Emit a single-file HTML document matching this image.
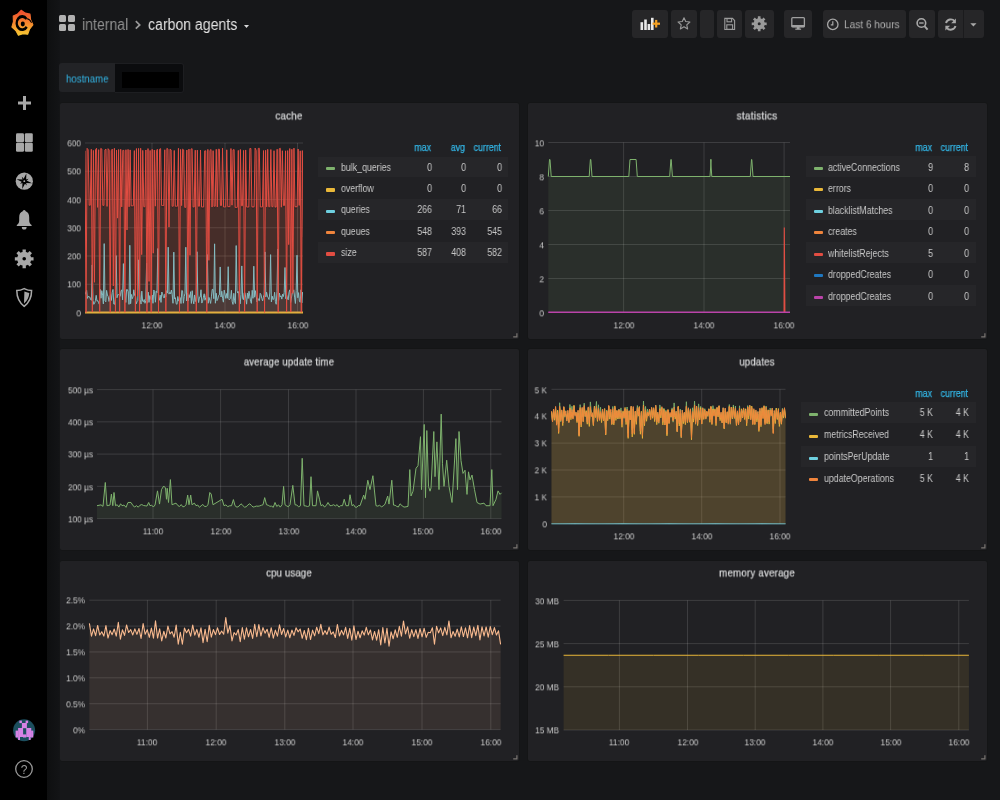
<!DOCTYPE html><html><head><meta charset="utf-8"><style>
html,body{margin:0;padding:0;}
body{width:1000px;height:800px;overflow:hidden;position:relative;background:#161719;font-family:"Liberation Sans",sans-serif;}
.t{position:absolute;white-space:nowrap;line-height:1;will-change:transform;}
.panel{position:absolute;background:#212124;border:1px solid #141516;border-radius:3px;box-sizing:border-box;}
.btn{position:absolute;top:10px;height:28px;background:#262628;border-radius:3px;}
.lrow{position:absolute;background:#262629;}
.sw{position:absolute;width:9.4px;height:3.2px;border-radius:1px;}
svg{position:absolute;left:0;top:0;overflow:visible;}
</style></head><body>
<div style="position:absolute;left:0;top:0;width:47px;height:800px;background:#000"></div>
<div style="position:absolute;left:47px;top:0;width:13px;height:800px;background:linear-gradient(90deg,#0e0f10,#131416)"></div>
<div class="panel" style="left:59px;top:102px;width:461px;height:238px"></div>
<svg width="1000" height="800"><path d="M513.2,336.9 L516.9,336.9 L516.9,333.3" fill="none" stroke="#7a7672" stroke-width="1.2"/></svg>
<div class="panel" style="left:527px;top:102px;width:461px;height:238px"></div>
<svg width="1000" height="800"><path d="M981.2,336.9 L984.9,336.9 L984.9,333.3" fill="none" stroke="#7a7672" stroke-width="1.2"/></svg>
<div class="panel" style="left:59px;top:348px;width:461px;height:203px"></div>
<svg width="1000" height="800"><path d="M513.2,547.9 L516.9,547.9 L516.9,544.3" fill="none" stroke="#7a7672" stroke-width="1.2"/></svg>
<div class="panel" style="left:527px;top:348px;width:461px;height:203px"></div>
<svg width="1000" height="800"><path d="M981.2,547.9 L984.9,547.9 L984.9,544.3" fill="none" stroke="#7a7672" stroke-width="1.2"/></svg>
<div class="panel" style="left:59px;top:560px;width:461px;height:202px"></div>
<svg width="1000" height="800"><path d="M513.2,758.9 L516.9,758.9 L516.9,755.3" fill="none" stroke="#7a7672" stroke-width="1.2"/></svg>
<div class="panel" style="left:527px;top:560px;width:461px;height:202px"></div>
<svg width="1000" height="800"><path d="M981.2,758.9 L984.9,758.9 L984.9,755.3" fill="none" stroke="#7a7672" stroke-width="1.2"/></svg>
<div style="position:absolute;left:59px;top:15px;width:16px;height:16px"><div style="position:absolute;left:0;top:0;width:7px;height:7px;background:#b1b1b1;border-radius:1.5px"></div><div style="position:absolute;left:9px;top:0;width:7px;height:7px;background:#b1b1b1;border-radius:1.5px"></div><div style="position:absolute;left:0;top:9px;width:7px;height:7px;background:#b1b1b1;border-radius:1.5px"></div><div style="position:absolute;left:9px;top:9px;width:7px;height:7px;background:#b1b1b1;border-radius:1.5px"></div></div>
<div class="t" style="left:82px;top:25px;font-size:16px;color:#8e8e8e;font-weight:normal;transform:translateY(-50%) scaleX(0.88);transform-origin:left center;">internal</div>
<svg width="1000" height="800" style="pointer-events:none"><path d="M135.8,21.2 L139.7,24.9 L135.8,28.6" stroke="#9a9a9a" stroke-width="1.7" fill="none"/></svg>
<div class="t" style="left:148px;top:25px;font-size:16px;color:#e3e3e3;font-weight:normal;transform:translateY(-50%) scaleX(0.88);transform-origin:left center;">carbon agents</div>
<svg width="1000" height="800"><path d="M244,25 L249,25 L246.5,28 Z" fill="#d8d9da"/></svg>
<div class="btn" style="left:632px;width:36px"></div>
<div class="btn" style="left:671px;width:26px"></div>
<div class="btn" style="left:700px;width:14px"></div>
<div class="btn" style="left:717px;width:25px"></div>
<div class="btn" style="left:745px;width:29px"></div>
<div class="btn" style="left:784px;width:28px"></div>
<div class="btn" style="left:823px;width:83px"></div>
<div class="btn" style="left:909px;width:26px"></div>
<div class="btn" style="left:938px;width:46px"></div>
<div style="position:absolute;left:963px;top:10px;width:1px;height:28px;background:#1b1b1d"></div>
<div class="t" style="left:843.8px;top:24.4px;font-size:11.6px;color:#b4b4b4;font-weight:normal;transform:translateY(-50%) scaleX(0.87);transform-origin:left center;">Last 6 hours</div>
<div style="position:absolute;left:59px;top:63px;width:56px;height:29px;background:#222326;border-radius:3px 0 0 3px"></div>
<div style="position:absolute;left:115px;top:62.5px;width:69px;height:30.5px;box-sizing:border-box;background:#0b0c0e;border:1px solid #1d1e21;border-left:none;border-radius:0 3px 3px 0"></div>
<div style="position:absolute;left:122px;top:72px;width:57px;height:16px;background:#000"></div>
<div class="t" style="left:66px;top:78.5px;font-size:11px;color:#33b5e5;font-weight:normal;transform:translateY(-50%) scaleX(0.88);transform-origin:left center;">hostname</div>
<div class="t" style="left:289.2px;top:116px;font-size:11px;color:#d8d9da;font-weight:normal;transform:translate(-50%,-50%) scaleX(0.89);transform-origin:center center;-webkit-text-stroke:0.25px #d8d9da;letter-spacing:0.25px;">cache</div>
<div class="t" style="left:81px;top:313.7px;font-size:9.3px;color:#c8c8c8;font-weight:normal;transform:translate(-100%,-50%) scaleX(0.89);transform-origin:right center;">0</div>
<div class="t" style="left:81px;top:285.45px;font-size:9.3px;color:#c8c8c8;font-weight:normal;transform:translate(-100%,-50%) scaleX(0.89);transform-origin:right center;">100</div>
<div class="t" style="left:81px;top:257.2px;font-size:9.3px;color:#c8c8c8;font-weight:normal;transform:translate(-100%,-50%) scaleX(0.89);transform-origin:right center;">200</div>
<div class="t" style="left:81px;top:228.95px;font-size:9.3px;color:#c8c8c8;font-weight:normal;transform:translate(-100%,-50%) scaleX(0.89);transform-origin:right center;">300</div>
<div class="t" style="left:81px;top:200.7px;font-size:9.3px;color:#c8c8c8;font-weight:normal;transform:translate(-100%,-50%) scaleX(0.89);transform-origin:right center;">400</div>
<div class="t" style="left:81px;top:172.45px;font-size:9.3px;color:#c8c8c8;font-weight:normal;transform:translate(-100%,-50%) scaleX(0.89);transform-origin:right center;">500</div>
<div class="t" style="left:81px;top:144.2px;font-size:9.3px;color:#c8c8c8;font-weight:normal;transform:translate(-100%,-50%) scaleX(0.89);transform-origin:right center;">600</div>
<div class="t" style="left:152px;top:326.4px;font-size:9.3px;color:#c8c8c8;font-weight:normal;transform:translate(-50%,-50%) scaleX(0.9);transform-origin:center center;">12:00</div>
<div class="t" style="left:225px;top:326.4px;font-size:9.3px;color:#c8c8c8;font-weight:normal;transform:translate(-50%,-50%) scaleX(0.9);transform-origin:center center;">14:00</div>
<div class="t" style="left:297.5px;top:326.4px;font-size:9.3px;color:#c8c8c8;font-weight:normal;transform:translate(-50%,-50%) scaleX(0.9);transform-origin:center center;">16:00</div>
<div class="t" style="left:431px;top:147.7px;font-size:10px;color:#33b5e5;font-weight:normal;transform:translate(-100%,-50%) scaleX(0.88);transform-origin:right center;-webkit-text-stroke:0.25px #33b5e5;">max</div>
<div class="t" style="left:465px;top:147.7px;font-size:10px;color:#33b5e5;font-weight:normal;transform:translate(-100%,-50%) scaleX(0.88);transform-origin:right center;-webkit-text-stroke:0.25px #33b5e5;">avg</div>
<div class="t" style="left:501px;top:147.7px;font-size:10px;color:#33b5e5;font-weight:normal;transform:translate(-100%,-50%) scaleX(0.88);transform-origin:right center;-webkit-text-stroke:0.25px #33b5e5;">current</div>
<div class="lrow" style="left:318px;top:156.6px;width:190px;height:20.6px"></div>
<div class="sw" style="left:326px;top:167.0px;background:#7EB26D"></div>
<div class="t" style="left:340.5px;top:167.7px;font-size:10px;color:#c8c8c8;font-weight:normal;transform:translateY(-50%) scaleX(0.88);transform-origin:left center;">bulk_queries</div>
<div class="t" style="left:432px;top:167.7px;font-size:10px;color:#c8c8c8;font-weight:normal;transform:translate(-100%,-50%) scaleX(0.88);transform-origin:right center;">0</div>
<div class="t" style="left:466px;top:167.7px;font-size:10px;color:#c8c8c8;font-weight:normal;transform:translate(-100%,-50%) scaleX(0.88);transform-origin:right center;">0</div>
<div class="t" style="left:502px;top:167.7px;font-size:10px;color:#c8c8c8;font-weight:normal;transform:translate(-100%,-50%) scaleX(0.88);transform-origin:right center;">0</div>
<div class="sw" style="left:326px;top:188.35px;background:#EAB839"></div>
<div class="t" style="left:340.5px;top:189.04999999999998px;font-size:10px;color:#c8c8c8;font-weight:normal;transform:translateY(-50%) scaleX(0.88);transform-origin:left center;">overflow</div>
<div class="t" style="left:432px;top:189.04999999999998px;font-size:10px;color:#c8c8c8;font-weight:normal;transform:translate(-100%,-50%) scaleX(0.88);transform-origin:right center;">0</div>
<div class="t" style="left:466px;top:189.04999999999998px;font-size:10px;color:#c8c8c8;font-weight:normal;transform:translate(-100%,-50%) scaleX(0.88);transform-origin:right center;">0</div>
<div class="t" style="left:502px;top:189.04999999999998px;font-size:10px;color:#c8c8c8;font-weight:normal;transform:translate(-100%,-50%) scaleX(0.88);transform-origin:right center;">0</div>
<div class="lrow" style="left:318px;top:199.3px;width:190px;height:20.6px"></div>
<div class="sw" style="left:326px;top:209.70000000000002px;background:#6ED0E0"></div>
<div class="t" style="left:340.5px;top:210.4px;font-size:10px;color:#c8c8c8;font-weight:normal;transform:translateY(-50%) scaleX(0.88);transform-origin:left center;">queries</div>
<div class="t" style="left:432px;top:210.4px;font-size:10px;color:#c8c8c8;font-weight:normal;transform:translate(-100%,-50%) scaleX(0.88);transform-origin:right center;">266</div>
<div class="t" style="left:466px;top:210.4px;font-size:10px;color:#c8c8c8;font-weight:normal;transform:translate(-100%,-50%) scaleX(0.88);transform-origin:right center;">71</div>
<div class="t" style="left:502px;top:210.4px;font-size:10px;color:#c8c8c8;font-weight:normal;transform:translate(-100%,-50%) scaleX(0.88);transform-origin:right center;">66</div>
<div class="sw" style="left:326px;top:231.05px;background:#EF843C"></div>
<div class="t" style="left:340.5px;top:231.75px;font-size:10px;color:#c8c8c8;font-weight:normal;transform:translateY(-50%) scaleX(0.88);transform-origin:left center;">queues</div>
<div class="t" style="left:432px;top:231.75px;font-size:10px;color:#c8c8c8;font-weight:normal;transform:translate(-100%,-50%) scaleX(0.88);transform-origin:right center;">548</div>
<div class="t" style="left:466px;top:231.75px;font-size:10px;color:#c8c8c8;font-weight:normal;transform:translate(-100%,-50%) scaleX(0.88);transform-origin:right center;">393</div>
<div class="t" style="left:502px;top:231.75px;font-size:10px;color:#c8c8c8;font-weight:normal;transform:translate(-100%,-50%) scaleX(0.88);transform-origin:right center;">545</div>
<div class="lrow" style="left:318px;top:242.0px;width:190px;height:20.6px"></div>
<div class="sw" style="left:326px;top:252.4px;background:#E24D42"></div>
<div class="t" style="left:340.5px;top:253.1px;font-size:10px;color:#c8c8c8;font-weight:normal;transform:translateY(-50%) scaleX(0.88);transform-origin:left center;">size</div>
<div class="t" style="left:432px;top:253.1px;font-size:10px;color:#c8c8c8;font-weight:normal;transform:translate(-100%,-50%) scaleX(0.88);transform-origin:right center;">587</div>
<div class="t" style="left:466px;top:253.1px;font-size:10px;color:#c8c8c8;font-weight:normal;transform:translate(-100%,-50%) scaleX(0.88);transform-origin:right center;">408</div>
<div class="t" style="left:502px;top:253.1px;font-size:10px;color:#c8c8c8;font-weight:normal;transform:translate(-100%,-50%) scaleX(0.88);transform-origin:right center;">582</div>
<div class="t" style="left:757px;top:116px;font-size:11px;color:#d8d9da;font-weight:normal;transform:translate(-50%,-50%) scaleX(0.91);transform-origin:center center;-webkit-text-stroke:0.25px #d8d9da;letter-spacing:0.25px;">statistics</div>
<div class="t" style="left:544px;top:313.7px;font-size:9.3px;color:#c8c8c8;font-weight:normal;transform:translate(-100%,-50%) scaleX(0.89);transform-origin:right center;">0</div>
<div class="t" style="left:544px;top:279.7px;font-size:9.3px;color:#c8c8c8;font-weight:normal;transform:translate(-100%,-50%) scaleX(0.89);transform-origin:right center;">2</div>
<div class="t" style="left:544px;top:245.7px;font-size:9.3px;color:#c8c8c8;font-weight:normal;transform:translate(-100%,-50%) scaleX(0.89);transform-origin:right center;">4</div>
<div class="t" style="left:544px;top:211.7px;font-size:9.3px;color:#c8c8c8;font-weight:normal;transform:translate(-100%,-50%) scaleX(0.89);transform-origin:right center;">6</div>
<div class="t" style="left:544px;top:177.7px;font-size:9.3px;color:#c8c8c8;font-weight:normal;transform:translate(-100%,-50%) scaleX(0.89);transform-origin:right center;">8</div>
<div class="t" style="left:544px;top:143.7px;font-size:9.3px;color:#c8c8c8;font-weight:normal;transform:translate(-100%,-50%) scaleX(0.89);transform-origin:right center;">10</div>
<div class="t" style="left:623.6px;top:326.4px;font-size:9.3px;color:#c8c8c8;font-weight:normal;transform:translate(-50%,-50%) scaleX(0.9);transform-origin:center center;">12:00</div>
<div class="t" style="left:704px;top:326.4px;font-size:9.3px;color:#c8c8c8;font-weight:normal;transform:translate(-50%,-50%) scaleX(0.9);transform-origin:center center;">14:00</div>
<div class="t" style="left:784.1px;top:326.4px;font-size:9.3px;color:#c8c8c8;font-weight:normal;transform:translate(-50%,-50%) scaleX(0.9);transform-origin:center center;">16:00</div>
<div class="t" style="left:932px;top:147.7px;font-size:10px;color:#33b5e5;font-weight:normal;transform:translate(-100%,-50%) scaleX(0.88);transform-origin:right center;-webkit-text-stroke:0.25px #33b5e5;">max</div>
<div class="t" style="left:968px;top:147.7px;font-size:10px;color:#33b5e5;font-weight:normal;transform:translate(-100%,-50%) scaleX(0.88);transform-origin:right center;-webkit-text-stroke:0.25px #33b5e5;">current</div>
<div class="lrow" style="left:805.5px;top:156.4px;width:170.8px;height:20.6px"></div>
<div class="sw" style="left:813.5px;top:166.8px;background:#7EB26D"></div>
<div class="t" style="left:828px;top:167.5px;font-size:10px;color:#c8c8c8;font-weight:normal;transform:translateY(-50%) scaleX(0.88);transform-origin:left center;">activeConnections</div>
<div class="t" style="left:933px;top:167.5px;font-size:10px;color:#c8c8c8;font-weight:normal;transform:translate(-100%,-50%) scaleX(0.88);transform-origin:right center;">9</div>
<div class="t" style="left:969px;top:167.5px;font-size:10px;color:#c8c8c8;font-weight:normal;transform:translate(-100%,-50%) scaleX(0.88);transform-origin:right center;">8</div>
<div class="sw" style="left:813.5px;top:188.3px;background:#EAB839"></div>
<div class="t" style="left:828px;top:189.0px;font-size:10px;color:#c8c8c8;font-weight:normal;transform:translateY(-50%) scaleX(0.88);transform-origin:left center;">errors</div>
<div class="t" style="left:933px;top:189.0px;font-size:10px;color:#c8c8c8;font-weight:normal;transform:translate(-100%,-50%) scaleX(0.88);transform-origin:right center;">0</div>
<div class="t" style="left:969px;top:189.0px;font-size:10px;color:#c8c8c8;font-weight:normal;transform:translate(-100%,-50%) scaleX(0.88);transform-origin:right center;">0</div>
<div class="lrow" style="left:805.5px;top:199.4px;width:170.8px;height:20.6px"></div>
<div class="sw" style="left:813.5px;top:209.8px;background:#6ED0E0"></div>
<div class="t" style="left:828px;top:210.5px;font-size:10px;color:#c8c8c8;font-weight:normal;transform:translateY(-50%) scaleX(0.88);transform-origin:left center;">blacklistMatches</div>
<div class="t" style="left:933px;top:210.5px;font-size:10px;color:#c8c8c8;font-weight:normal;transform:translate(-100%,-50%) scaleX(0.88);transform-origin:right center;">0</div>
<div class="t" style="left:969px;top:210.5px;font-size:10px;color:#c8c8c8;font-weight:normal;transform:translate(-100%,-50%) scaleX(0.88);transform-origin:right center;">0</div>
<div class="sw" style="left:813.5px;top:231.3px;background:#EF843C"></div>
<div class="t" style="left:828px;top:232.0px;font-size:10px;color:#c8c8c8;font-weight:normal;transform:translateY(-50%) scaleX(0.88);transform-origin:left center;">creates</div>
<div class="t" style="left:933px;top:232.0px;font-size:10px;color:#c8c8c8;font-weight:normal;transform:translate(-100%,-50%) scaleX(0.88);transform-origin:right center;">0</div>
<div class="t" style="left:969px;top:232.0px;font-size:10px;color:#c8c8c8;font-weight:normal;transform:translate(-100%,-50%) scaleX(0.88);transform-origin:right center;">0</div>
<div class="lrow" style="left:805.5px;top:242.4px;width:170.8px;height:20.6px"></div>
<div class="sw" style="left:813.5px;top:252.8px;background:#E24D42"></div>
<div class="t" style="left:828px;top:253.5px;font-size:10px;color:#c8c8c8;font-weight:normal;transform:translateY(-50%) scaleX(0.88);transform-origin:left center;">whitelistRejects</div>
<div class="t" style="left:933px;top:253.5px;font-size:10px;color:#c8c8c8;font-weight:normal;transform:translate(-100%,-50%) scaleX(0.88);transform-origin:right center;">5</div>
<div class="t" style="left:969px;top:253.5px;font-size:10px;color:#c8c8c8;font-weight:normal;transform:translate(-100%,-50%) scaleX(0.88);transform-origin:right center;">0</div>
<div class="sw" style="left:813.5px;top:274.29999999999995px;background:#1F78C1"></div>
<div class="t" style="left:828px;top:275.0px;font-size:10px;color:#c8c8c8;font-weight:normal;transform:translateY(-50%) scaleX(0.88);transform-origin:left center;">droppedCreates</div>
<div class="t" style="left:933px;top:275.0px;font-size:10px;color:#c8c8c8;font-weight:normal;transform:translate(-100%,-50%) scaleX(0.88);transform-origin:right center;">0</div>
<div class="t" style="left:969px;top:275.0px;font-size:10px;color:#c8c8c8;font-weight:normal;transform:translate(-100%,-50%) scaleX(0.88);transform-origin:right center;">0</div>
<div class="lrow" style="left:805.5px;top:285.4px;width:170.8px;height:20.6px"></div>
<div class="sw" style="left:813.5px;top:295.79999999999995px;background:#BA43A9"></div>
<div class="t" style="left:828px;top:296.5px;font-size:10px;color:#c8c8c8;font-weight:normal;transform:translateY(-50%) scaleX(0.88);transform-origin:left center;">droppedCreates</div>
<div class="t" style="left:933px;top:296.5px;font-size:10px;color:#c8c8c8;font-weight:normal;transform:translate(-100%,-50%) scaleX(0.88);transform-origin:right center;">0</div>
<div class="t" style="left:969px;top:296.5px;font-size:10px;color:#c8c8c8;font-weight:normal;transform:translate(-100%,-50%) scaleX(0.88);transform-origin:right center;">0</div>
<div class="t" style="left:289px;top:362px;font-size:11px;color:#d8d9da;font-weight:normal;transform:translate(-50%,-50%) scaleX(0.86);transform-origin:center center;-webkit-text-stroke:0.25px #d8d9da;letter-spacing:0.25px;">average update time</div>
<div class="t" style="left:92.5px;top:519.8000000000001px;font-size:9.3px;color:#c8c8c8;font-weight:normal;transform:translate(-100%,-50%) scaleX(0.89);transform-origin:right center;">100 µs</div>
<div class="t" style="left:92.5px;top:487.55px;font-size:9.3px;color:#c8c8c8;font-weight:normal;transform:translate(-100%,-50%) scaleX(0.89);transform-origin:right center;">200 µs</div>
<div class="t" style="left:92.5px;top:455.3px;font-size:9.3px;color:#c8c8c8;font-weight:normal;transform:translate(-100%,-50%) scaleX(0.89);transform-origin:right center;">300 µs</div>
<div class="t" style="left:92.5px;top:423.05px;font-size:9.3px;color:#c8c8c8;font-weight:normal;transform:translate(-100%,-50%) scaleX(0.89);transform-origin:right center;">400 µs</div>
<div class="t" style="left:92.5px;top:390.8px;font-size:9.3px;color:#c8c8c8;font-weight:normal;transform:translate(-100%,-50%) scaleX(0.89);transform-origin:right center;">500 µs</div>
<div class="t" style="left:153px;top:532.4px;font-size:9.3px;color:#c8c8c8;font-weight:normal;transform:translate(-50%,-50%) scaleX(0.9);transform-origin:center center;">11:00</div>
<div class="t" style="left:220.6px;top:532.4px;font-size:9.3px;color:#c8c8c8;font-weight:normal;transform:translate(-50%,-50%) scaleX(0.9);transform-origin:center center;">12:00</div>
<div class="t" style="left:288.5px;top:532.4px;font-size:9.3px;color:#c8c8c8;font-weight:normal;transform:translate(-50%,-50%) scaleX(0.9);transform-origin:center center;">13:00</div>
<div class="t" style="left:356px;top:532.4px;font-size:9.3px;color:#c8c8c8;font-weight:normal;transform:translate(-50%,-50%) scaleX(0.9);transform-origin:center center;">14:00</div>
<div class="t" style="left:423.4px;top:532.4px;font-size:9.3px;color:#c8c8c8;font-weight:normal;transform:translate(-50%,-50%) scaleX(0.9);transform-origin:center center;">15:00</div>
<div class="t" style="left:490.8px;top:532.4px;font-size:9.3px;color:#c8c8c8;font-weight:normal;transform:translate(-50%,-50%) scaleX(0.9);transform-origin:center center;">16:00</div>
<div class="t" style="left:756.8px;top:362px;font-size:11px;color:#d8d9da;font-weight:normal;transform:translate(-50%,-50%) scaleX(0.86);transform-origin:center center;-webkit-text-stroke:0.25px #d8d9da;letter-spacing:0.25px;">updates</div>
<div class="t" style="left:547px;top:525.0px;font-size:9.3px;color:#c8c8c8;font-weight:normal;transform:translate(-100%,-50%) scaleX(0.89);transform-origin:right center;">0</div>
<div class="t" style="left:547px;top:498.09999999999997px;font-size:9.3px;color:#c8c8c8;font-weight:normal;transform:translate(-100%,-50%) scaleX(0.89);transform-origin:right center;">1 K</div>
<div class="t" style="left:547px;top:471.2px;font-size:9.3px;color:#c8c8c8;font-weight:normal;transform:translate(-100%,-50%) scaleX(0.89);transform-origin:right center;">2 K</div>
<div class="t" style="left:547px;top:444.3px;font-size:9.3px;color:#c8c8c8;font-weight:normal;transform:translate(-100%,-50%) scaleX(0.89);transform-origin:right center;">3 K</div>
<div class="t" style="left:547px;top:417.4px;font-size:9.3px;color:#c8c8c8;font-weight:normal;transform:translate(-100%,-50%) scaleX(0.89);transform-origin:right center;">4 K</div>
<div class="t" style="left:547px;top:390.5px;font-size:9.3px;color:#c8c8c8;font-weight:normal;transform:translate(-100%,-50%) scaleX(0.89);transform-origin:right center;">5 K</div>
<div class="t" style="left:623.7px;top:537.4px;font-size:9.3px;color:#c8c8c8;font-weight:normal;transform:translate(-50%,-50%) scaleX(0.9);transform-origin:center center;">12:00</div>
<div class="t" style="left:701.7px;top:537.4px;font-size:9.3px;color:#c8c8c8;font-weight:normal;transform:translate(-50%,-50%) scaleX(0.9);transform-origin:center center;">14:00</div>
<div class="t" style="left:780px;top:537.4px;font-size:9.3px;color:#c8c8c8;font-weight:normal;transform:translate(-50%,-50%) scaleX(0.9);transform-origin:center center;">16:00</div>
<div class="t" style="left:932px;top:394.2px;font-size:10px;color:#33b5e5;font-weight:normal;transform:translate(-100%,-50%) scaleX(0.88);transform-origin:right center;-webkit-text-stroke:0.25px #33b5e5;">max</div>
<div class="t" style="left:968px;top:394.2px;font-size:10px;color:#33b5e5;font-weight:normal;transform:translate(-100%,-50%) scaleX(0.88);transform-origin:right center;-webkit-text-stroke:0.25px #33b5e5;">current</div>
<div class="lrow" style="left:801px;top:402.4px;width:175px;height:20.8px"></div>
<div class="sw" style="left:809px;top:413.09999999999997px;background:#7EB26D"></div>
<div class="t" style="left:823.5px;top:413.4px;font-size:10px;color:#c8c8c8;font-weight:normal;transform:translateY(-50%) scaleX(0.88);transform-origin:left center;">committedPoints</div>
<div class="t" style="left:933px;top:413.4px;font-size:10px;color:#c8c8c8;font-weight:normal;transform:translate(-100%,-50%) scaleX(0.88);transform-origin:right center;">5 K</div>
<div class="t" style="left:969px;top:413.4px;font-size:10px;color:#c8c8c8;font-weight:normal;transform:translate(-100%,-50%) scaleX(0.88);transform-origin:right center;">4 K</div>
<div class="sw" style="left:809px;top:434.79999999999995px;background:#EAB839"></div>
<div class="t" style="left:823.5px;top:435.09999999999997px;font-size:10px;color:#c8c8c8;font-weight:normal;transform:translateY(-50%) scaleX(0.88);transform-origin:left center;">metricsReceived</div>
<div class="t" style="left:933px;top:435.09999999999997px;font-size:10px;color:#c8c8c8;font-weight:normal;transform:translate(-100%,-50%) scaleX(0.88);transform-origin:right center;">4 K</div>
<div class="t" style="left:969px;top:435.09999999999997px;font-size:10px;color:#c8c8c8;font-weight:normal;transform:translate(-100%,-50%) scaleX(0.88);transform-origin:right center;">4 K</div>
<div class="lrow" style="left:801px;top:445.79999999999995px;width:175px;height:20.8px"></div>
<div class="sw" style="left:809px;top:456.49999999999994px;background:#6ED0E0"></div>
<div class="t" style="left:823.5px;top:456.79999999999995px;font-size:10px;color:#c8c8c8;font-weight:normal;transform:translateY(-50%) scaleX(0.88);transform-origin:left center;">pointsPerUpdate</div>
<div class="t" style="left:933px;top:456.79999999999995px;font-size:10px;color:#c8c8c8;font-weight:normal;transform:translate(-100%,-50%) scaleX(0.88);transform-origin:right center;">1</div>
<div class="t" style="left:969px;top:456.79999999999995px;font-size:10px;color:#c8c8c8;font-weight:normal;transform:translate(-100%,-50%) scaleX(0.88);transform-origin:right center;">1</div>
<div class="sw" style="left:809px;top:478.2px;background:#EF843C"></div>
<div class="t" style="left:823.5px;top:478.5px;font-size:10px;color:#c8c8c8;font-weight:normal;transform:translateY(-50%) scaleX(0.88);transform-origin:left center;">updateOperations</div>
<div class="t" style="left:933px;top:478.5px;font-size:10px;color:#c8c8c8;font-weight:normal;transform:translate(-100%,-50%) scaleX(0.88);transform-origin:right center;">5 K</div>
<div class="t" style="left:969px;top:478.5px;font-size:10px;color:#c8c8c8;font-weight:normal;transform:translate(-100%,-50%) scaleX(0.88);transform-origin:right center;">4 K</div>
<div class="t" style="left:289px;top:573px;font-size:11px;color:#d8d9da;font-weight:normal;transform:translate(-50%,-50%) scaleX(0.86);transform-origin:center center;-webkit-text-stroke:0.25px #d8d9da;letter-spacing:0.25px;">cpu usage</div>
<div class="t" style="left:85px;top:730.8000000000001px;font-size:9.3px;color:#c8c8c8;font-weight:normal;transform:translate(-100%,-50%) scaleX(0.89);transform-origin:right center;">0%</div>
<div class="t" style="left:85px;top:704.9200000000001px;font-size:9.3px;color:#c8c8c8;font-weight:normal;transform:translate(-100%,-50%) scaleX(0.89);transform-origin:right center;">0.5%</div>
<div class="t" style="left:85px;top:679.0400000000001px;font-size:9.3px;color:#c8c8c8;font-weight:normal;transform:translate(-100%,-50%) scaleX(0.89);transform-origin:right center;">1.0%</div>
<div class="t" style="left:85px;top:653.1600000000001px;font-size:9.3px;color:#c8c8c8;font-weight:normal;transform:translate(-100%,-50%) scaleX(0.89);transform-origin:right center;">1.5%</div>
<div class="t" style="left:85px;top:627.2800000000001px;font-size:9.3px;color:#c8c8c8;font-weight:normal;transform:translate(-100%,-50%) scaleX(0.89);transform-origin:right center;">2.0%</div>
<div class="t" style="left:85px;top:601.4000000000001px;font-size:9.3px;color:#c8c8c8;font-weight:normal;transform:translate(-100%,-50%) scaleX(0.89);transform-origin:right center;">2.5%</div>
<div class="t" style="left:147.4px;top:742.9px;font-size:9.3px;color:#c8c8c8;font-weight:normal;transform:translate(-50%,-50%) scaleX(0.9);transform-origin:center center;">11:00</div>
<div class="t" style="left:216.2px;top:742.9px;font-size:9.3px;color:#c8c8c8;font-weight:normal;transform:translate(-50%,-50%) scaleX(0.9);transform-origin:center center;">12:00</div>
<div class="t" style="left:284.8px;top:742.9px;font-size:9.3px;color:#c8c8c8;font-weight:normal;transform:translate(-50%,-50%) scaleX(0.9);transform-origin:center center;">13:00</div>
<div class="t" style="left:353px;top:742.9px;font-size:9.3px;color:#c8c8c8;font-weight:normal;transform:translate(-50%,-50%) scaleX(0.9);transform-origin:center center;">14:00</div>
<div class="t" style="left:422px;top:742.9px;font-size:9.3px;color:#c8c8c8;font-weight:normal;transform:translate(-50%,-50%) scaleX(0.9);transform-origin:center center;">15:00</div>
<div class="t" style="left:490.8px;top:742.9px;font-size:9.3px;color:#c8c8c8;font-weight:normal;transform:translate(-50%,-50%) scaleX(0.9);transform-origin:center center;">16:00</div>
<div class="t" style="left:757px;top:573px;font-size:11px;color:#d8d9da;font-weight:normal;transform:translate(-50%,-50%) scaleX(0.88);transform-origin:center center;-webkit-text-stroke:0.25px #d8d9da;letter-spacing:0.25px;">memory average</div>
<div class="t" style="left:558.5px;top:731.2px;font-size:9.3px;color:#c8c8c8;font-weight:normal;transform:translate(-100%,-50%) scaleX(0.89);transform-origin:right center;">15 MB</div>
<div class="t" style="left:558.5px;top:688.0px;font-size:9.3px;color:#c8c8c8;font-weight:normal;transform:translate(-100%,-50%) scaleX(0.89);transform-origin:right center;">20 MB</div>
<div class="t" style="left:558.5px;top:644.8000000000001px;font-size:9.3px;color:#c8c8c8;font-weight:normal;transform:translate(-100%,-50%) scaleX(0.89);transform-origin:right center;">25 MB</div>
<div class="t" style="left:558.5px;top:601.6px;font-size:9.3px;color:#c8c8c8;font-weight:normal;transform:translate(-100%,-50%) scaleX(0.89);transform-origin:right center;">30 MB</div>
<div class="t" style="left:619.4px;top:742.9px;font-size:9.3px;color:#c8c8c8;font-weight:normal;transform:translate(-50%,-50%) scaleX(0.9);transform-origin:center center;">11:00</div>
<div class="t" style="left:687.5px;top:742.9px;font-size:9.3px;color:#c8c8c8;font-weight:normal;transform:translate(-50%,-50%) scaleX(0.9);transform-origin:center center;">12:00</div>
<div class="t" style="left:755.2px;top:742.9px;font-size:9.3px;color:#c8c8c8;font-weight:normal;transform:translate(-50%,-50%) scaleX(0.9);transform-origin:center center;">13:00</div>
<div class="t" style="left:822.9px;top:742.9px;font-size:9.3px;color:#c8c8c8;font-weight:normal;transform:translate(-50%,-50%) scaleX(0.9);transform-origin:center center;">14:00</div>
<div class="t" style="left:890.6px;top:742.9px;font-size:9.3px;color:#c8c8c8;font-weight:normal;transform:translate(-50%,-50%) scaleX(0.9);transform-origin:center center;">15:00</div>
<div class="t" style="left:958.8px;top:742.9px;font-size:9.3px;color:#c8c8c8;font-weight:normal;transform:translate(-50%,-50%) scaleX(0.9);transform-origin:center center;">16:00</div>
<svg width="1000" height="800"><defs><linearGradient id="lg" x1="0" y1="0" x2="0" y2="1"><stop offset="0" stop-color="#EF4F2E"/><stop offset="0.55" stop-color="#F68C2E"/><stop offset="1" stop-color="#F6C532"/></linearGradient></defs><g transform="translate(22.2,0) scale(0.84,1) translate(-22.2,0)"><polygon points="21.08,10.25 25.95,13.19 31.55,14.21 32.29,19.85 34.98,24.86 31.03,28.96 28.79,34.19 23.12,33.66 17.64,35.17 14.52,30.41 9.92,27.06 11.70,21.65 11.45,15.97 16.79,13.99" fill="url(#lg)" stroke="url(#lg)" stroke-width="1.2" stroke-linejoin="round"/><circle cx="22.2" cy="23.1" r="10.9" fill="url(#lg)"/><path d="M27.26,18.86 A6.6,6.6 0 1 0 27.61,26.89" fill="none" stroke="#000" stroke-width="2.8"/><path d="M27.26,18.86 Q30.51,18.30 33.39,22.71" fill="none" stroke="#000" stroke-width="1.1"/><circle cx="22.9" cy="24.0" r="2.4" fill="#000"/></g><rect x="18" y="101.5" width="13" height="3" fill="#a8a8a8"/><rect x="23" y="96" width="3" height="14" fill="#a8a8a8"/><rect x="16" y="133.3" width="8" height="9" rx="1.3" fill="#a8a8a8"/><rect x="24.8" y="133.3" width="8" height="9" rx="1.3" fill="#a8a8a8"/><rect x="16" y="142.8" width="8" height="9" rx="1.3" fill="#a8a8a8"/><rect x="24.8" y="142.8" width="8" height="9" rx="1.3" fill="#a8a8a8"/><circle cx="24.3" cy="181.2" r="8.6" fill="#a8a8a8"/><polygon points="26.37,173.47 26.12,180.15 32.03,183.27 25.35,183.02 22.23,188.93 22.48,182.25 16.57,179.13 23.25,179.38" fill="#000"/><polygon points="28.63,178.70 25.75,181.59 26.80,185.53 23.91,182.65 19.97,183.70 22.85,180.81 21.80,176.87 24.69,179.75" fill="#000"/><circle cx="24.3" cy="181.2" r="0.9" fill="#a8a8a8"/><path d="M24.2,210 C25.2,210 25.6,210.8 25.7,211.3 C28.2,212.2 29.2,214.5 29.2,217.5 L29.2,220.5 C29.2,222.8 30.2,224 31.6,225 L31.6,226 L16.8,226 L16.8,225 C18.2,224 19.2,222.8 19.2,220.5 L19.2,217.5 C19.2,214.5 20.2,212.2 22.7,211.3 C22.8,210.8 23.2,210 24.2,210 Z" fill="#a8a8a8"/><path d="M21.8,227 A2.4,2.6 0 0 0 26.6,227 Z" fill="#a8a8a8"/><path d="M30.67,256.12 L31.01,257.17 L33.55,257.13 L33.55,260.47 L31.01,260.43 L30.67,261.48 L30.17,262.46 L31.99,264.23 L29.63,266.59 L27.86,264.77 L26.88,265.27 L25.83,265.61 L25.87,268.15 L22.53,268.15 L22.57,265.61 L21.52,265.27 L20.54,264.77 L18.77,266.59 L16.41,264.23 L18.23,262.46 L17.73,261.48 L17.39,260.43 L14.85,260.47 L14.85,257.13 L17.39,257.17 L17.73,256.12 L18.23,255.14 L16.41,253.37 L18.77,251.01 L20.54,252.83 L21.52,252.33 L22.57,251.99 L22.53,249.45 L25.87,249.45 L25.83,251.99 L26.88,252.33 L27.86,252.83 L29.63,251.01 L31.99,253.37 L30.17,255.14 Z" fill="#a8a8a8" transform="rotate(-90 24.2 258.8)"/><circle cx="24.2" cy="258.8" r="1.8" fill="#000"/><path d="M24.2,288.6 C21.5,290 18.5,290.6 16.8,290.6 C16.8,297 19,302.5 24.2,306.4 C29.4,302.5 31.6,297 31.6,290.6 C29.9,290.6 26.9,290 24.2,288.6 Z" fill="none" stroke="#a8a8a8" stroke-width="1.5"/><path d="M24.4,291.6 C25.8,292.3 27.6,292.7 29.3,292.9 C29,297 27.4,300.6 24,303.6 Z" fill="#a8a8a8"/><circle cx="24.1" cy="730.2" r="11" fill="#1c4e5e"/><rect x="19.4" y="720.6" width="2.5" height="2.5" fill="#d682e6"/><rect x="25.6" y="720.6" width="2.5" height="2.5" fill="#d682e6"/><rect x="21.9" y="723" width="5" height="5.2" fill="#d682e6"/><rect x="18.1" y="728" width="5" height="9" fill="#d682e6"/><rect x="26.25" y="728" width="5" height="9" fill="#d682e6"/><rect x="15.6" y="730.6" width="2.6" height="6.9" fill="#d682e6"/><rect x="31.1" y="730.6" width="2.2" height="6.9" fill="#d682e6"/><rect x="23" y="734.4" width="3.3" height="3.1" fill="#d682e6"/><rect x="18.1" y="737" width="1.9" height="3" fill="#d682e6"/><rect x="28.75" y="737" width="1.9" height="3" fill="#d682e6"/><circle cx="24" cy="769" r="8.3" fill="none" stroke="#9a9a9a" stroke-width="1.3"/><rect x="640.5" y="22.2" width="2.6" height="7.800000000000001" fill="#e8e8e8"/><rect x="644.2" y="19.5" width="2.6" height="10.5" fill="#e8e8e8"/><rect x="647.6" y="24" width="2.6" height="6" fill="#e8e8e8"/><rect x="651" y="17.8" width="2.6" height="12.2" fill="#e8e8e8"/><rect x="652.5" y="22.6" width="7.5" height="2.2" fill="#F5A123"/><rect x="655.1" y="19.9" width="2.2" height="7.6" fill="#F5A123"/><polygon points="684.00,17.70 685.70,21.55 689.90,21.98 686.76,24.80 687.64,28.92 684.00,26.80 680.36,28.92 681.24,24.80 678.10,21.98 682.30,21.55" fill="none" stroke="#9a9a9a" stroke-width="1.1" stroke-linejoin="round"/><path d="M724.8,18.4 L732.5,18.4 L734.6,20.5 L734.6,29.5 L724.8,29.5 Z" fill="none" stroke="#9c9c9c" stroke-width="1.1"/><rect x="727" y="18.6" width="4.6" height="3.2" fill="none" stroke="#9c9c9c" stroke-width="1.1"/><rect x="726.8" y="24.8" width="5.8" height="4.5" fill="none" stroke="#9c9c9c" stroke-width="1.1"/><path d="M764.37,21.66 L764.65,22.49 L766.68,22.46 L766.68,25.14 L764.65,25.11 L764.37,25.94 L763.97,26.73 L765.44,28.15 L763.55,30.04 L762.13,28.57 L761.34,28.97 L760.51,29.25 L760.54,31.28 L757.86,31.28 L757.89,29.25 L757.06,28.97 L756.27,28.57 L754.85,30.04 L752.96,28.15 L754.43,26.73 L754.03,25.94 L753.75,25.11 L751.72,25.14 L751.72,22.46 L753.75,22.49 L754.03,21.66 L754.43,20.87 L752.96,19.45 L754.85,17.56 L756.27,19.03 L757.06,18.63 L757.89,18.35 L757.86,16.32 L760.54,16.32 L760.51,18.35 L761.34,18.63 L762.13,19.03 L763.55,17.56 L765.44,19.45 L763.97,20.87 Z" fill="#9a9a9a" transform="rotate(-90 759.2 23.8)"/><circle cx="759.2" cy="23.8" r="1.5" fill="#262628"/><rect x="791.8" y="17.6" width="12.6" height="9.2" rx="1" fill="none" stroke="#a0a0a0" stroke-width="1.3"/><rect x="791.5" y="25" width="13.2" height="2.2" fill="#a0a0a0"/><rect x="796.8" y="27" width="2.8" height="2" fill="#a0a0a0"/><rect x="795.3" y="28.6" width="5.8" height="1.2" fill="#a0a0a0"/><circle cx="832.8" cy="24.4" r="5.2" fill="none" stroke="#a8a8a8" stroke-width="1.3"/><path d="M832.8,21.2 L832.8,24.8 L830.8,24.8" fill="none" stroke="#a8a8a8" stroke-width="1.2"/><circle cx="921.4" cy="23" r="4.3" fill="none" stroke="#a8a8a8" stroke-width="1.6"/><path d="M919.2,23 L923.6,23" stroke="#a8a8a8" stroke-width="1.4"/><path d="M924.5,26.2 L927.6,29.6" stroke="#a8a8a8" stroke-width="2"/><path d="M946,23 A5,5 0 0 1 954.6,21.2" fill="none" stroke="#a8a8a8" stroke-width="1.9"/><path d="M955.5,26 A5,5 0 0 1 946.8,27.8" fill="none" stroke="#a8a8a8" stroke-width="1.9"/><polygon points="955.9,18.4 955.9,23.2 951.2,23.2" fill="#a8a8a8"/><polygon points="945.4,30.6 945.4,25.8 950.1,25.8" fill="#a8a8a8"/><polygon points="970.3,23.2 976.5,23.2 973.4,26.6" fill="#a8a8a8"/><line x1="85" x2="303" y1="312.5" y2="312.5" stroke="rgba(255,255,255,0.13)" stroke-width="1"/><line x1="85" x2="303" y1="284.25" y2="284.25" stroke="rgba(255,255,255,0.13)" stroke-width="1"/><line x1="85" x2="303" y1="256.0" y2="256.0" stroke="rgba(255,255,255,0.13)" stroke-width="1"/><line x1="85" x2="303" y1="227.75" y2="227.75" stroke="rgba(255,255,255,0.13)" stroke-width="1"/><line x1="85" x2="303" y1="199.5" y2="199.5" stroke="rgba(255,255,255,0.13)" stroke-width="1"/><line x1="85" x2="303" y1="171.25" y2="171.25" stroke="rgba(255,255,255,0.13)" stroke-width="1"/><line x1="85" x2="303" y1="143.0" y2="143.0" stroke="rgba(255,255,255,0.13)" stroke-width="1"/><line x1="152" x2="152" y1="143" y2="312.5" stroke="rgba(255,255,255,0.13)" stroke-width="1"/><line x1="225" x2="225" y1="143" y2="312.5" stroke="rgba(255,255,255,0.13)" stroke-width="1"/><line x1="297.5" x2="297.5" y1="143" y2="312.5" stroke="rgba(255,255,255,0.13)" stroke-width="1"/><path d="M85.00,312.50 L85.00,312.50 L86.15,312.50 L87.31,312.50 L88.46,312.50 L89.61,312.50 L90.77,312.50 L91.92,312.50 L93.07,312.50 L94.23,312.50 L95.38,312.50 L96.53,312.50 L97.69,312.50 L98.84,312.50 L99.99,312.50 L101.15,312.50 L102.30,312.50 L103.46,312.50 L104.61,312.50 L105.76,312.50 L106.92,312.50 L108.07,312.50 L109.22,312.50 L110.38,312.50 L111.53,312.50 L112.68,312.50 L113.84,312.50 L114.99,312.50 L116.14,312.50 L117.30,312.50 L118.45,312.50 L119.60,312.50 L120.76,312.50 L121.91,312.50 L123.06,312.50 L124.22,312.50 L125.37,312.50 L126.52,312.50 L127.68,312.50 L128.83,312.50 L129.98,312.50 L131.14,312.50 L132.29,312.50 L133.44,312.50 L134.60,312.50 L135.75,312.50 L136.90,312.50 L138.06,312.50 L139.21,312.50 L140.37,312.50 L141.52,312.50 L142.67,312.50 L143.83,312.50 L144.98,312.50 L146.13,312.50 L147.29,312.50 L148.44,312.50 L149.59,312.50 L150.75,312.50 L151.90,312.50 L153.05,312.50 L154.21,312.50 L155.36,312.50 L156.51,312.50 L157.67,312.50 L158.82,312.50 L159.97,312.50 L161.13,312.50 L162.28,312.50 L163.43,312.50 L164.59,312.50 L165.74,312.50 L166.89,312.50 L168.05,312.50 L169.20,312.50 L170.35,312.50 L171.51,312.50 L172.66,312.50 L173.81,312.50 L174.97,312.50 L176.12,312.50 L177.28,312.50 L178.43,312.50 L179.58,312.50 L180.74,312.50 L181.89,312.50 L183.04,312.50 L184.20,312.50 L185.35,312.50 L186.50,312.50 L187.66,312.50 L188.81,312.50 L189.96,312.50 L191.12,312.50 L192.27,312.50 L193.42,312.50 L194.58,312.50 L195.73,312.50 L196.88,312.50 L198.04,312.50 L199.19,312.50 L200.34,312.50 L201.50,312.50 L202.65,312.50 L203.80,312.50 L204.96,312.50 L206.11,312.50 L207.26,312.50 L208.42,312.50 L209.57,312.50 L210.72,312.50 L211.88,312.50 L213.03,312.50 L214.19,312.50 L215.34,312.50 L216.49,312.50 L217.65,312.50 L218.80,312.50 L219.95,312.50 L221.11,312.50 L222.26,312.50 L223.41,312.50 L224.57,312.50 L225.72,312.50 L226.87,312.50 L228.03,312.50 L229.18,312.50 L230.33,312.50 L231.49,312.50 L232.64,312.50 L233.79,312.50 L234.95,312.50 L236.10,312.50 L237.25,312.50 L238.41,312.50 L239.56,312.50 L240.71,312.50 L241.87,312.50 L243.02,312.50 L244.17,312.50 L245.33,312.50 L246.48,312.50 L247.63,312.50 L248.79,312.50 L249.94,312.50 L251.10,312.50 L252.25,312.50 L253.40,312.50 L254.56,312.50 L255.71,312.50 L256.86,312.50 L258.02,312.50 L259.17,312.50 L260.32,312.50 L261.48,312.50 L262.63,312.50 L263.78,312.50 L264.94,312.50 L266.09,312.50 L267.24,312.50 L268.40,312.50 L269.55,312.50 L270.70,312.50 L271.86,312.50 L273.01,312.50 L274.16,312.50 L275.32,312.50 L276.47,312.50 L277.62,312.50 L278.78,312.50 L279.93,312.50 L281.08,312.50 L282.24,312.50 L283.39,312.50 L284.54,312.50 L285.70,312.50 L286.85,312.50 L288.01,312.50 L289.16,312.50 L290.31,312.50 L291.47,312.50 L292.62,312.50 L293.77,312.50 L294.93,312.50 L296.08,312.50 L297.23,312.50 L298.39,312.50 L299.54,312.50 L300.69,312.50 L301.85,312.50 L303.00,312.50 L303.00,312.50 Z" fill="#7EB26D" fill-opacity="0.1" stroke="none"/><path d="M85.00,312.50 L86.15,312.50 L87.31,312.50 L88.46,312.50 L89.61,312.50 L90.77,312.50 L91.92,312.50 L93.07,312.50 L94.23,312.50 L95.38,312.50 L96.53,312.50 L97.69,312.50 L98.84,312.50 L99.99,312.50 L101.15,312.50 L102.30,312.50 L103.46,312.50 L104.61,312.50 L105.76,312.50 L106.92,312.50 L108.07,312.50 L109.22,312.50 L110.38,312.50 L111.53,312.50 L112.68,312.50 L113.84,312.50 L114.99,312.50 L116.14,312.50 L117.30,312.50 L118.45,312.50 L119.60,312.50 L120.76,312.50 L121.91,312.50 L123.06,312.50 L124.22,312.50 L125.37,312.50 L126.52,312.50 L127.68,312.50 L128.83,312.50 L129.98,312.50 L131.14,312.50 L132.29,312.50 L133.44,312.50 L134.60,312.50 L135.75,312.50 L136.90,312.50 L138.06,312.50 L139.21,312.50 L140.37,312.50 L141.52,312.50 L142.67,312.50 L143.83,312.50 L144.98,312.50 L146.13,312.50 L147.29,312.50 L148.44,312.50 L149.59,312.50 L150.75,312.50 L151.90,312.50 L153.05,312.50 L154.21,312.50 L155.36,312.50 L156.51,312.50 L157.67,312.50 L158.82,312.50 L159.97,312.50 L161.13,312.50 L162.28,312.50 L163.43,312.50 L164.59,312.50 L165.74,312.50 L166.89,312.50 L168.05,312.50 L169.20,312.50 L170.35,312.50 L171.51,312.50 L172.66,312.50 L173.81,312.50 L174.97,312.50 L176.12,312.50 L177.28,312.50 L178.43,312.50 L179.58,312.50 L180.74,312.50 L181.89,312.50 L183.04,312.50 L184.20,312.50 L185.35,312.50 L186.50,312.50 L187.66,312.50 L188.81,312.50 L189.96,312.50 L191.12,312.50 L192.27,312.50 L193.42,312.50 L194.58,312.50 L195.73,312.50 L196.88,312.50 L198.04,312.50 L199.19,312.50 L200.34,312.50 L201.50,312.50 L202.65,312.50 L203.80,312.50 L204.96,312.50 L206.11,312.50 L207.26,312.50 L208.42,312.50 L209.57,312.50 L210.72,312.50 L211.88,312.50 L213.03,312.50 L214.19,312.50 L215.34,312.50 L216.49,312.50 L217.65,312.50 L218.80,312.50 L219.95,312.50 L221.11,312.50 L222.26,312.50 L223.41,312.50 L224.57,312.50 L225.72,312.50 L226.87,312.50 L228.03,312.50 L229.18,312.50 L230.33,312.50 L231.49,312.50 L232.64,312.50 L233.79,312.50 L234.95,312.50 L236.10,312.50 L237.25,312.50 L238.41,312.50 L239.56,312.50 L240.71,312.50 L241.87,312.50 L243.02,312.50 L244.17,312.50 L245.33,312.50 L246.48,312.50 L247.63,312.50 L248.79,312.50 L249.94,312.50 L251.10,312.50 L252.25,312.50 L253.40,312.50 L254.56,312.50 L255.71,312.50 L256.86,312.50 L258.02,312.50 L259.17,312.50 L260.32,312.50 L261.48,312.50 L262.63,312.50 L263.78,312.50 L264.94,312.50 L266.09,312.50 L267.24,312.50 L268.40,312.50 L269.55,312.50 L270.70,312.50 L271.86,312.50 L273.01,312.50 L274.16,312.50 L275.32,312.50 L276.47,312.50 L277.62,312.50 L278.78,312.50 L279.93,312.50 L281.08,312.50 L282.24,312.50 L283.39,312.50 L284.54,312.50 L285.70,312.50 L286.85,312.50 L288.01,312.50 L289.16,312.50 L290.31,312.50 L291.47,312.50 L292.62,312.50 L293.77,312.50 L294.93,312.50 L296.08,312.50 L297.23,312.50 L298.39,312.50 L299.54,312.50 L300.69,312.50 L301.85,312.50 L303.00,312.50" fill="none" stroke="#7EB26D" stroke-width="1" stroke-linejoin="round"/><path d="M85.00,312.50 L85.00,312.50 L86.15,312.50 L87.31,312.50 L88.46,312.50 L89.61,312.50 L90.77,312.50 L91.92,312.50 L93.07,312.50 L94.23,312.50 L95.38,312.50 L96.53,312.50 L97.69,312.50 L98.84,312.50 L99.99,312.50 L101.15,312.50 L102.30,312.50 L103.46,312.50 L104.61,312.50 L105.76,312.50 L106.92,312.50 L108.07,312.50 L109.22,312.50 L110.38,312.50 L111.53,312.50 L112.68,312.50 L113.84,312.50 L114.99,312.50 L116.14,312.50 L117.30,312.50 L118.45,312.50 L119.60,312.50 L120.76,312.50 L121.91,312.50 L123.06,312.50 L124.22,312.50 L125.37,312.50 L126.52,312.50 L127.68,312.50 L128.83,312.50 L129.98,312.50 L131.14,312.50 L132.29,312.50 L133.44,312.50 L134.60,312.50 L135.75,312.50 L136.90,312.50 L138.06,312.50 L139.21,312.50 L140.37,312.50 L141.52,312.50 L142.67,312.50 L143.83,312.50 L144.98,312.50 L146.13,312.50 L147.29,312.50 L148.44,312.50 L149.59,312.50 L150.75,312.50 L151.90,312.50 L153.05,312.50 L154.21,312.50 L155.36,312.50 L156.51,312.50 L157.67,312.50 L158.82,312.50 L159.97,312.50 L161.13,312.50 L162.28,312.50 L163.43,312.50 L164.59,312.50 L165.74,312.50 L166.89,312.50 L168.05,312.50 L169.20,312.50 L170.35,312.50 L171.51,312.50 L172.66,312.50 L173.81,312.50 L174.97,312.50 L176.12,312.50 L177.28,312.50 L178.43,312.50 L179.58,312.50 L180.74,312.50 L181.89,312.50 L183.04,312.50 L184.20,312.50 L185.35,312.50 L186.50,312.50 L187.66,312.50 L188.81,312.50 L189.96,312.50 L191.12,312.50 L192.27,312.50 L193.42,312.50 L194.58,312.50 L195.73,312.50 L196.88,312.50 L198.04,312.50 L199.19,312.50 L200.34,312.50 L201.50,312.50 L202.65,312.50 L203.80,312.50 L204.96,312.50 L206.11,312.50 L207.26,312.50 L208.42,312.50 L209.57,312.50 L210.72,312.50 L211.88,312.50 L213.03,312.50 L214.19,312.50 L215.34,312.50 L216.49,312.50 L217.65,312.50 L218.80,312.50 L219.95,312.50 L221.11,312.50 L222.26,312.50 L223.41,312.50 L224.57,312.50 L225.72,312.50 L226.87,312.50 L228.03,312.50 L229.18,312.50 L230.33,312.50 L231.49,312.50 L232.64,312.50 L233.79,312.50 L234.95,312.50 L236.10,312.50 L237.25,312.50 L238.41,312.50 L239.56,312.50 L240.71,312.50 L241.87,312.50 L243.02,312.50 L244.17,312.50 L245.33,312.50 L246.48,312.50 L247.63,312.50 L248.79,312.50 L249.94,312.50 L251.10,312.50 L252.25,312.50 L253.40,312.50 L254.56,312.50 L255.71,312.50 L256.86,312.50 L258.02,312.50 L259.17,312.50 L260.32,312.50 L261.48,312.50 L262.63,312.50 L263.78,312.50 L264.94,312.50 L266.09,312.50 L267.24,312.50 L268.40,312.50 L269.55,312.50 L270.70,312.50 L271.86,312.50 L273.01,312.50 L274.16,312.50 L275.32,312.50 L276.47,312.50 L277.62,312.50 L278.78,312.50 L279.93,312.50 L281.08,312.50 L282.24,312.50 L283.39,312.50 L284.54,312.50 L285.70,312.50 L286.85,312.50 L288.01,312.50 L289.16,312.50 L290.31,312.50 L291.47,312.50 L292.62,312.50 L293.77,312.50 L294.93,312.50 L296.08,312.50 L297.23,312.50 L298.39,312.50 L299.54,312.50 L300.69,312.50 L301.85,312.50 L303.00,312.50 L303.00,312.50 Z" fill="#EAB839" fill-opacity="0.1" stroke="none"/><path d="M85.00,312.50 L86.15,312.50 L87.31,312.50 L88.46,312.50 L89.61,312.50 L90.77,312.50 L91.92,312.50 L93.07,312.50 L94.23,312.50 L95.38,312.50 L96.53,312.50 L97.69,312.50 L98.84,312.50 L99.99,312.50 L101.15,312.50 L102.30,312.50 L103.46,312.50 L104.61,312.50 L105.76,312.50 L106.92,312.50 L108.07,312.50 L109.22,312.50 L110.38,312.50 L111.53,312.50 L112.68,312.50 L113.84,312.50 L114.99,312.50 L116.14,312.50 L117.30,312.50 L118.45,312.50 L119.60,312.50 L120.76,312.50 L121.91,312.50 L123.06,312.50 L124.22,312.50 L125.37,312.50 L126.52,312.50 L127.68,312.50 L128.83,312.50 L129.98,312.50 L131.14,312.50 L132.29,312.50 L133.44,312.50 L134.60,312.50 L135.75,312.50 L136.90,312.50 L138.06,312.50 L139.21,312.50 L140.37,312.50 L141.52,312.50 L142.67,312.50 L143.83,312.50 L144.98,312.50 L146.13,312.50 L147.29,312.50 L148.44,312.50 L149.59,312.50 L150.75,312.50 L151.90,312.50 L153.05,312.50 L154.21,312.50 L155.36,312.50 L156.51,312.50 L157.67,312.50 L158.82,312.50 L159.97,312.50 L161.13,312.50 L162.28,312.50 L163.43,312.50 L164.59,312.50 L165.74,312.50 L166.89,312.50 L168.05,312.50 L169.20,312.50 L170.35,312.50 L171.51,312.50 L172.66,312.50 L173.81,312.50 L174.97,312.50 L176.12,312.50 L177.28,312.50 L178.43,312.50 L179.58,312.50 L180.74,312.50 L181.89,312.50 L183.04,312.50 L184.20,312.50 L185.35,312.50 L186.50,312.50 L187.66,312.50 L188.81,312.50 L189.96,312.50 L191.12,312.50 L192.27,312.50 L193.42,312.50 L194.58,312.50 L195.73,312.50 L196.88,312.50 L198.04,312.50 L199.19,312.50 L200.34,312.50 L201.50,312.50 L202.65,312.50 L203.80,312.50 L204.96,312.50 L206.11,312.50 L207.26,312.50 L208.42,312.50 L209.57,312.50 L210.72,312.50 L211.88,312.50 L213.03,312.50 L214.19,312.50 L215.34,312.50 L216.49,312.50 L217.65,312.50 L218.80,312.50 L219.95,312.50 L221.11,312.50 L222.26,312.50 L223.41,312.50 L224.57,312.50 L225.72,312.50 L226.87,312.50 L228.03,312.50 L229.18,312.50 L230.33,312.50 L231.49,312.50 L232.64,312.50 L233.79,312.50 L234.95,312.50 L236.10,312.50 L237.25,312.50 L238.41,312.50 L239.56,312.50 L240.71,312.50 L241.87,312.50 L243.02,312.50 L244.17,312.50 L245.33,312.50 L246.48,312.50 L247.63,312.50 L248.79,312.50 L249.94,312.50 L251.10,312.50 L252.25,312.50 L253.40,312.50 L254.56,312.50 L255.71,312.50 L256.86,312.50 L258.02,312.50 L259.17,312.50 L260.32,312.50 L261.48,312.50 L262.63,312.50 L263.78,312.50 L264.94,312.50 L266.09,312.50 L267.24,312.50 L268.40,312.50 L269.55,312.50 L270.70,312.50 L271.86,312.50 L273.01,312.50 L274.16,312.50 L275.32,312.50 L276.47,312.50 L277.62,312.50 L278.78,312.50 L279.93,312.50 L281.08,312.50 L282.24,312.50 L283.39,312.50 L284.54,312.50 L285.70,312.50 L286.85,312.50 L288.01,312.50 L289.16,312.50 L290.31,312.50 L291.47,312.50 L292.62,312.50 L293.77,312.50 L294.93,312.50 L296.08,312.50 L297.23,312.50 L298.39,312.50 L299.54,312.50 L300.69,312.50 L301.85,312.50 L303.00,312.50" fill="none" stroke="#EAB839" stroke-width="2" stroke-linejoin="round"/><clipPath id="cc"><rect x="85" y="130" width="218" height="190"/></clipPath><g clip-path="url(#cc)"><path d="M85.00,312.50 L85.00,291.63 L85.80,294.28 L86.60,290.16 L87.40,298.40 L88.20,296.40 L89.00,296.74 L89.80,297.04 L90.60,299.60 L91.40,300.33 L92.20,264.95 L93.00,300.49 L93.80,304.33 L94.60,303.24 L95.40,300.62 L96.20,295.31 L97.00,301.20 L97.80,300.56 L98.60,302.73 L99.40,304.41 L100.20,289.42 L101.00,298.22 L101.80,290.63 L102.60,295.11 L103.40,303.93 L104.20,243.62 L105.00,300.59 L105.80,301.83 L106.60,290.37 L107.40,295.00 L108.20,296.49 L109.00,301.45 L109.80,297.79 L110.60,294.34 L111.40,300.46 L112.20,292.33 L113.00,289.42 L113.80,304.03 L114.60,304.31 L115.40,296.88 L116.20,255.60 L117.00,297.77 L117.80,294.55 L118.60,294.67 L119.40,294.57 L120.20,296.26 L121.00,291.03 L121.80,289.79 L122.60,299.89 L123.40,263.64 L124.20,291.14 L125.00,293.47 L125.80,302.46 L126.60,289.50 L127.40,289.61 L128.20,291.82 L129.00,304.37 L129.80,245.27 L130.60,303.74 L131.40,294.44 L132.20,298.78 L133.00,296.87 L133.80,289.78 L134.60,295.46 L135.40,294.02 L136.20,303.90 L137.00,301.76 L137.80,300.49 L138.60,259.84 L139.40,289.57 L140.20,299.65 L141.00,304.06 L141.80,291.13 L142.60,301.27 L143.40,301.80 L144.20,299.47 L145.00,303.31 L145.80,300.33 L146.60,263.11 L147.40,303.20 L148.20,292.13 L149.00,302.40 L149.80,295.64 L150.60,298.58 L151.40,300.02 L152.20,294.98 L153.00,303.30 L153.80,289.98 L154.60,291.57 L155.40,302.22 L156.20,290.97 L157.00,292.63 L157.80,248.53 L158.60,297.05 L159.40,300.25 L160.20,295.15 L161.00,302.38 L161.80,292.01 L162.60,293.68 L163.40,296.76 L164.20,298.04 L165.00,293.90 L165.80,296.88 L166.60,290.71 L167.40,293.11 L168.20,247.16 L169.00,294.12 L169.80,292.42 L170.60,293.74 L171.40,290.01 L172.20,294.78 L173.00,303.29 L173.80,252.13 L174.60,298.84 L175.40,297.70 L176.20,303.82 L177.00,304.30 L177.80,296.48 L178.60,300.86 L179.40,300.57 L180.20,297.62 L181.00,303.52 L181.80,290.36 L182.60,290.89 L183.40,303.19 L184.20,296.57 L185.00,293.21 L185.80,247.26 L186.60,301.01 L187.40,293.05 L188.20,301.07 L189.00,294.68 L189.80,297.57 L190.60,291.69 L191.40,303.42 L192.20,290.70 L193.00,300.21 L193.80,303.88 L194.60,294.94 L195.40,301.57 L196.20,295.44 L197.00,251.72 L197.80,295.11 L198.60,302.55 L199.40,297.23 L200.20,297.18 L201.00,289.75 L201.80,303.07 L202.60,301.27 L203.40,297.12 L204.20,293.78 L205.00,300.23 L205.80,297.48 L206.60,292.89 L207.40,254.61 L208.20,303.28 L209.00,297.38 L209.80,300.17 L210.60,303.42 L211.40,296.86 L212.20,289.42 L213.00,289.43 L213.80,298.69 L214.60,243.84 L215.40,303.21 L216.20,293.19 L217.00,300.60 L217.80,299.11 L218.60,295.39 L219.40,294.95 L220.20,266.94 L221.00,296.99 L221.80,291.22 L222.60,298.58 L223.40,302.16 L224.20,290.10 L225.00,294.19 L225.80,298.41 L226.60,293.50 L227.40,298.24 L228.20,266.71 L229.00,299.64 L229.80,299.43 L230.60,298.51 L231.40,290.25 L232.20,301.60 L233.00,304.41 L233.80,293.30 L234.60,300.73 L235.40,303.60 L236.20,245.55 L237.00,290.47 L237.80,293.06 L238.60,291.56 L239.40,300.31 L240.20,303.80 L241.00,294.49 L241.80,265.92 L242.60,297.94 L243.40,299.78 L244.20,292.80 L245.00,292.61 L245.80,298.06 L246.60,304.15 L247.40,292.97 L248.20,298.49 L249.00,291.23 L249.80,296.14 L250.60,301.49 L251.40,303.36 L252.20,290.35 L253.00,298.32 L253.80,266.21 L254.60,297.18 L255.40,290.68 L256.20,296.20 L257.00,301.99 L257.80,298.26 L258.60,300.29 L259.40,300.69 L260.20,293.32 L261.00,294.63 L261.80,298.39 L262.60,300.95 L263.40,297.22 L264.20,294.39 L265.00,251.95 L265.80,296.95 L266.60,292.21 L267.40,296.19 L268.20,297.68 L269.00,299.51 L269.80,293.01 L270.60,254.65 L271.40,301.93 L272.20,296.11 L273.00,299.72 L273.80,298.97 L274.60,292.24 L275.40,301.51 L276.20,304.28 L277.00,291.31 L277.80,249.06 L278.60,300.47 L279.40,293.12 L280.20,296.99 L281.00,295.83 L281.80,299.10 L282.60,294.11 L283.40,296.52 L284.20,292.53 L285.00,267.51 L285.80,298.72 L286.60,294.74 L287.40,298.00 L288.20,299.83 L289.00,292.17 L289.80,289.82 L290.60,302.65 L291.40,298.10 L292.20,292.94 L293.00,292.32 L293.80,289.82 L294.60,297.12 L295.40,303.47 L296.20,290.40 L297.00,255.21 L297.80,297.74 L298.60,292.64 L299.40,301.18 L300.20,302.27 L301.00,289.76 L301.80,302.93 L302.60,292.00 L302.60,312.50 Z" fill="#6ED0E0" fill-opacity="0.1" stroke="none"/><path d="M85.00,291.63 L85.80,294.28 L86.60,290.16 L87.40,298.40 L88.20,296.40 L89.00,296.74 L89.80,297.04 L90.60,299.60 L91.40,300.33 L92.20,264.95 L93.00,300.49 L93.80,304.33 L94.60,303.24 L95.40,300.62 L96.20,295.31 L97.00,301.20 L97.80,300.56 L98.60,302.73 L99.40,304.41 L100.20,289.42 L101.00,298.22 L101.80,290.63 L102.60,295.11 L103.40,303.93 L104.20,243.62 L105.00,300.59 L105.80,301.83 L106.60,290.37 L107.40,295.00 L108.20,296.49 L109.00,301.45 L109.80,297.79 L110.60,294.34 L111.40,300.46 L112.20,292.33 L113.00,289.42 L113.80,304.03 L114.60,304.31 L115.40,296.88 L116.20,255.60 L117.00,297.77 L117.80,294.55 L118.60,294.67 L119.40,294.57 L120.20,296.26 L121.00,291.03 L121.80,289.79 L122.60,299.89 L123.40,263.64 L124.20,291.14 L125.00,293.47 L125.80,302.46 L126.60,289.50 L127.40,289.61 L128.20,291.82 L129.00,304.37 L129.80,245.27 L130.60,303.74 L131.40,294.44 L132.20,298.78 L133.00,296.87 L133.80,289.78 L134.60,295.46 L135.40,294.02 L136.20,303.90 L137.00,301.76 L137.80,300.49 L138.60,259.84 L139.40,289.57 L140.20,299.65 L141.00,304.06 L141.80,291.13 L142.60,301.27 L143.40,301.80 L144.20,299.47 L145.00,303.31 L145.80,300.33 L146.60,263.11 L147.40,303.20 L148.20,292.13 L149.00,302.40 L149.80,295.64 L150.60,298.58 L151.40,300.02 L152.20,294.98 L153.00,303.30 L153.80,289.98 L154.60,291.57 L155.40,302.22 L156.20,290.97 L157.00,292.63 L157.80,248.53 L158.60,297.05 L159.40,300.25 L160.20,295.15 L161.00,302.38 L161.80,292.01 L162.60,293.68 L163.40,296.76 L164.20,298.04 L165.00,293.90 L165.80,296.88 L166.60,290.71 L167.40,293.11 L168.20,247.16 L169.00,294.12 L169.80,292.42 L170.60,293.74 L171.40,290.01 L172.20,294.78 L173.00,303.29 L173.80,252.13 L174.60,298.84 L175.40,297.70 L176.20,303.82 L177.00,304.30 L177.80,296.48 L178.60,300.86 L179.40,300.57 L180.20,297.62 L181.00,303.52 L181.80,290.36 L182.60,290.89 L183.40,303.19 L184.20,296.57 L185.00,293.21 L185.80,247.26 L186.60,301.01 L187.40,293.05 L188.20,301.07 L189.00,294.68 L189.80,297.57 L190.60,291.69 L191.40,303.42 L192.20,290.70 L193.00,300.21 L193.80,303.88 L194.60,294.94 L195.40,301.57 L196.20,295.44 L197.00,251.72 L197.80,295.11 L198.60,302.55 L199.40,297.23 L200.20,297.18 L201.00,289.75 L201.80,303.07 L202.60,301.27 L203.40,297.12 L204.20,293.78 L205.00,300.23 L205.80,297.48 L206.60,292.89 L207.40,254.61 L208.20,303.28 L209.00,297.38 L209.80,300.17 L210.60,303.42 L211.40,296.86 L212.20,289.42 L213.00,289.43 L213.80,298.69 L214.60,243.84 L215.40,303.21 L216.20,293.19 L217.00,300.60 L217.80,299.11 L218.60,295.39 L219.40,294.95 L220.20,266.94 L221.00,296.99 L221.80,291.22 L222.60,298.58 L223.40,302.16 L224.20,290.10 L225.00,294.19 L225.80,298.41 L226.60,293.50 L227.40,298.24 L228.20,266.71 L229.00,299.64 L229.80,299.43 L230.60,298.51 L231.40,290.25 L232.20,301.60 L233.00,304.41 L233.80,293.30 L234.60,300.73 L235.40,303.60 L236.20,245.55 L237.00,290.47 L237.80,293.06 L238.60,291.56 L239.40,300.31 L240.20,303.80 L241.00,294.49 L241.80,265.92 L242.60,297.94 L243.40,299.78 L244.20,292.80 L245.00,292.61 L245.80,298.06 L246.60,304.15 L247.40,292.97 L248.20,298.49 L249.00,291.23 L249.80,296.14 L250.60,301.49 L251.40,303.36 L252.20,290.35 L253.00,298.32 L253.80,266.21 L254.60,297.18 L255.40,290.68 L256.20,296.20 L257.00,301.99 L257.80,298.26 L258.60,300.29 L259.40,300.69 L260.20,293.32 L261.00,294.63 L261.80,298.39 L262.60,300.95 L263.40,297.22 L264.20,294.39 L265.00,251.95 L265.80,296.95 L266.60,292.21 L267.40,296.19 L268.20,297.68 L269.00,299.51 L269.80,293.01 L270.60,254.65 L271.40,301.93 L272.20,296.11 L273.00,299.72 L273.80,298.97 L274.60,292.24 L275.40,301.51 L276.20,304.28 L277.00,291.31 L277.80,249.06 L278.60,300.47 L279.40,293.12 L280.20,296.99 L281.00,295.83 L281.80,299.10 L282.60,294.11 L283.40,296.52 L284.20,292.53 L285.00,267.51 L285.80,298.72 L286.60,294.74 L287.40,298.00 L288.20,299.83 L289.00,292.17 L289.80,289.82 L290.60,302.65 L291.40,298.10 L292.20,292.94 L293.00,292.32 L293.80,289.82 L294.60,297.12 L295.40,303.47 L296.20,290.40 L297.00,255.21 L297.80,297.74 L298.60,292.64 L299.40,301.18 L300.20,302.27 L301.00,289.76 L301.80,302.93 L302.60,292.00" fill="none" stroke="#6ED0E0" stroke-width="1.0" stroke-linejoin="round"/><path d="M85.00,312.50 L85.00,161.22 L86.05,312.46 L87.10,158.80 L88.15,160.18 L89.20,207.49 L90.25,207.49 L91.30,159.72 L92.35,312.03 L93.40,160.87 L94.45,282.28 L95.50,160.18 L96.55,158.71 L97.60,209.62 L98.65,160.11 L99.70,312.14 L100.75,158.87 L101.80,159.41 L102.85,207.64 L103.90,207.64 L104.95,160.34 L106.00,159.59 L107.05,208.69 L108.10,159.12 L109.15,160.46 L110.20,312.23 L111.25,161.15 L112.30,159.56 L113.35,285.96 L114.40,158.77 L115.45,312.08 L116.50,160.60 L117.55,218.13 L118.60,159.98 L119.65,312.21 L120.70,159.73 L121.75,209.14 L122.80,160.77 L123.85,160.85 L124.90,312.20 L125.95,160.18 L127.00,230.01 L128.05,159.88 L129.10,209.06 L130.15,160.37 L131.20,208.05 L132.25,208.05 L133.30,208.05 L134.35,161.04 L135.40,311.70 L136.45,159.01 L137.50,296.20 L138.55,158.90 L139.60,312.17 L140.65,158.77 L141.70,254.63 L142.75,160.85 L143.80,209.01 L144.85,209.01 L145.90,160.47 L146.95,312.30 L148.00,159.04 L149.05,281.42 L150.10,160.89 L151.15,312.26 L152.20,159.72 L153.25,253.20 L154.30,160.49 L155.35,208.44 L156.40,160.79 L157.45,159.65 L158.50,312.41 L159.55,159.67 L160.60,159.08 L161.65,207.78 L162.70,207.78 L163.75,207.78 L164.80,160.23 L165.85,312.02 L166.90,158.82 L167.95,159.56 L169.00,227.10 L170.05,159.60 L171.10,160.33 L172.15,208.48 L173.20,208.48 L174.25,160.94 L175.30,208.50 L176.35,208.50 L177.40,208.50 L178.45,158.78 L179.50,312.21 L180.55,159.89 L181.60,207.87 L182.65,159.56 L183.70,160.49 L184.75,209.62 L185.80,209.62 L186.85,160.50 L187.90,312.19 L188.95,159.54 L190.00,255.30 L191.05,159.47 L192.10,159.17 L193.15,209.23 L194.20,209.23 L195.25,160.63 L196.30,312.06 L197.35,160.60 L198.40,208.48 L199.45,208.48 L200.50,160.49 L201.55,209.24 L202.60,209.24 L203.65,209.24 L204.70,161.33 L205.75,161.24 L206.80,312.31 L207.85,159.87 L208.90,260.30 L209.95,160.91 L211.00,159.89 L212.05,209.30 L213.10,161.11 L214.15,208.49 L215.20,208.49 L216.25,159.76 L217.30,209.22 L218.35,159.66 L219.40,159.67 L220.45,207.79 L221.50,207.79 L222.55,158.62 L223.60,209.23 L224.65,209.23 L225.70,209.23 L226.75,160.27 L227.80,208.90 L228.85,208.90 L229.90,208.90 L230.95,158.98 L232.00,207.44 L233.05,160.37 L234.10,160.03 L235.15,209.64 L236.20,209.64 L237.25,209.64 L238.30,160.87 L239.35,312.29 L240.40,159.95 L241.45,208.00 L242.50,208.00 L243.55,160.89 L244.60,311.87 L245.65,160.41 L246.70,209.28 L247.75,209.28 L248.80,209.28 L249.85,158.91 L250.90,158.97 L251.95,209.16 L253.00,209.16 L254.05,209.16 L255.10,158.55 L256.15,160.80 L257.20,312.10 L258.25,158.88 L259.30,158.71 L260.35,209.18 L261.40,209.18 L262.45,209.18 L263.50,161.03 L264.55,312.34 L265.60,160.72 L266.65,209.13 L267.70,159.79 L268.75,208.98 L269.80,208.98 L270.85,159.97 L271.90,208.99 L272.95,208.99 L274.00,161.14 L275.05,209.31 L276.10,209.31 L277.15,159.71 L278.20,312.23 L279.25,159.22 L280.30,158.74 L281.35,209.44 L282.40,161.19 L283.45,207.73 L284.50,207.73 L285.55,161.27 L286.60,311.69 L287.65,161.04 L288.70,244.60 L289.75,158.99 L290.80,312.06 L291.85,159.73 L292.90,293.39 L293.95,158.59 L295.00,209.00 L296.05,209.00 L297.10,209.00 L298.15,159.47 L299.20,207.67 L300.25,161.28 L301.30,312.27 L302.35,161.10 L303.40,237.15 L303.40,312.50 Z" fill="#EF843C" fill-opacity="0.1" stroke="none"/><path d="M85.00,161.22 L86.05,312.46 L87.10,158.80 L88.15,160.18 L89.20,207.49 L90.25,207.49 L91.30,159.72 L92.35,312.03 L93.40,160.87 L94.45,282.28 L95.50,160.18 L96.55,158.71 L97.60,209.62 L98.65,160.11 L99.70,312.14 L100.75,158.87 L101.80,159.41 L102.85,207.64 L103.90,207.64 L104.95,160.34 L106.00,159.59 L107.05,208.69 L108.10,159.12 L109.15,160.46 L110.20,312.23 L111.25,161.15 L112.30,159.56 L113.35,285.96 L114.40,158.77 L115.45,312.08 L116.50,160.60 L117.55,218.13 L118.60,159.98 L119.65,312.21 L120.70,159.73 L121.75,209.14 L122.80,160.77 L123.85,160.85 L124.90,312.20 L125.95,160.18 L127.00,230.01 L128.05,159.88 L129.10,209.06 L130.15,160.37 L131.20,208.05 L132.25,208.05 L133.30,208.05 L134.35,161.04 L135.40,311.70 L136.45,159.01 L137.50,296.20 L138.55,158.90 L139.60,312.17 L140.65,158.77 L141.70,254.63 L142.75,160.85 L143.80,209.01 L144.85,209.01 L145.90,160.47 L146.95,312.30 L148.00,159.04 L149.05,281.42 L150.10,160.89 L151.15,312.26 L152.20,159.72 L153.25,253.20 L154.30,160.49 L155.35,208.44 L156.40,160.79 L157.45,159.65 L158.50,312.41 L159.55,159.67 L160.60,159.08 L161.65,207.78 L162.70,207.78 L163.75,207.78 L164.80,160.23 L165.85,312.02 L166.90,158.82 L167.95,159.56 L169.00,227.10 L170.05,159.60 L171.10,160.33 L172.15,208.48 L173.20,208.48 L174.25,160.94 L175.30,208.50 L176.35,208.50 L177.40,208.50 L178.45,158.78 L179.50,312.21 L180.55,159.89 L181.60,207.87 L182.65,159.56 L183.70,160.49 L184.75,209.62 L185.80,209.62 L186.85,160.50 L187.90,312.19 L188.95,159.54 L190.00,255.30 L191.05,159.47 L192.10,159.17 L193.15,209.23 L194.20,209.23 L195.25,160.63 L196.30,312.06 L197.35,160.60 L198.40,208.48 L199.45,208.48 L200.50,160.49 L201.55,209.24 L202.60,209.24 L203.65,209.24 L204.70,161.33 L205.75,161.24 L206.80,312.31 L207.85,159.87 L208.90,260.30 L209.95,160.91 L211.00,159.89 L212.05,209.30 L213.10,161.11 L214.15,208.49 L215.20,208.49 L216.25,159.76 L217.30,209.22 L218.35,159.66 L219.40,159.67 L220.45,207.79 L221.50,207.79 L222.55,158.62 L223.60,209.23 L224.65,209.23 L225.70,209.23 L226.75,160.27 L227.80,208.90 L228.85,208.90 L229.90,208.90 L230.95,158.98 L232.00,207.44 L233.05,160.37 L234.10,160.03 L235.15,209.64 L236.20,209.64 L237.25,209.64 L238.30,160.87 L239.35,312.29 L240.40,159.95 L241.45,208.00 L242.50,208.00 L243.55,160.89 L244.60,311.87 L245.65,160.41 L246.70,209.28 L247.75,209.28 L248.80,209.28 L249.85,158.91 L250.90,158.97 L251.95,209.16 L253.00,209.16 L254.05,209.16 L255.10,158.55 L256.15,160.80 L257.20,312.10 L258.25,158.88 L259.30,158.71 L260.35,209.18 L261.40,209.18 L262.45,209.18 L263.50,161.03 L264.55,312.34 L265.60,160.72 L266.65,209.13 L267.70,159.79 L268.75,208.98 L269.80,208.98 L270.85,159.97 L271.90,208.99 L272.95,208.99 L274.00,161.14 L275.05,209.31 L276.10,209.31 L277.15,159.71 L278.20,312.23 L279.25,159.22 L280.30,158.74 L281.35,209.44 L282.40,161.19 L283.45,207.73 L284.50,207.73 L285.55,161.27 L286.60,311.69 L287.65,161.04 L288.70,244.60 L289.75,158.99 L290.80,312.06 L291.85,159.73 L292.90,293.39 L293.95,158.59 L295.00,209.00 L296.05,209.00 L297.10,209.00 L298.15,159.47 L299.20,207.67 L300.25,161.28 L301.30,312.27 L302.35,161.10 L303.40,237.15" fill="none" stroke="#EF843C" stroke-width="0.0" stroke-linejoin="round"/><path d="M85.00,312.50 L85.00,150.76 L86.05,312.46 L87.10,148.35 L88.15,149.73 L89.20,205.23 L90.25,205.23 L91.30,149.27 L92.35,312.03 L93.40,150.42 L94.45,282.28 L95.50,149.73 L96.55,148.26 L97.60,207.36 L98.65,149.66 L99.70,312.14 L100.75,148.42 L101.80,148.96 L102.85,205.38 L103.90,205.38 L104.95,149.89 L106.00,149.14 L107.05,206.43 L108.10,148.67 L109.15,150.01 L110.20,312.23 L111.25,150.69 L112.30,149.11 L113.35,285.96 L114.40,148.32 L115.45,312.08 L116.50,150.15 L117.55,218.13 L118.60,149.53 L119.65,312.21 L120.70,149.28 L121.75,206.88 L122.80,150.31 L123.85,150.40 L124.90,312.20 L125.95,149.72 L127.00,230.01 L128.05,149.42 L129.10,206.80 L130.15,149.91 L131.20,205.79 L132.25,205.79 L133.30,205.79 L134.35,150.59 L135.40,311.70 L136.45,148.56 L137.50,296.20 L138.55,148.45 L139.60,312.17 L140.65,148.31 L141.70,254.63 L142.75,150.40 L143.80,206.75 L144.85,206.75 L145.90,150.01 L146.95,312.30 L148.00,148.58 L149.05,281.42 L150.10,150.43 L151.15,312.26 L152.20,149.27 L153.25,253.20 L154.30,150.04 L155.35,206.18 L156.40,150.34 L157.45,149.19 L158.50,312.41 L159.55,149.22 L160.60,148.62 L161.65,205.52 L162.70,205.52 L163.75,205.52 L164.80,149.78 L165.85,312.02 L166.90,148.37 L167.95,149.11 L169.00,227.10 L170.05,149.15 L171.10,149.88 L172.15,206.22 L173.20,206.22 L174.25,150.48 L175.30,206.24 L176.35,206.24 L177.40,206.24 L178.45,148.33 L179.50,312.21 L180.55,149.44 L181.60,205.61 L182.65,149.11 L183.70,150.03 L184.75,207.36 L185.80,207.36 L186.85,150.05 L187.90,312.19 L188.95,149.09 L190.00,255.30 L191.05,149.02 L192.10,148.72 L193.15,206.97 L194.20,206.97 L195.25,150.18 L196.30,312.06 L197.35,150.15 L198.40,206.22 L199.45,206.22 L200.50,150.04 L201.55,206.98 L202.60,206.98 L203.65,206.98 L204.70,150.88 L205.75,150.78 L206.80,312.31 L207.85,149.41 L208.90,260.30 L209.95,150.46 L211.00,149.44 L212.05,207.04 L213.10,150.66 L214.15,206.23 L215.20,206.23 L216.25,149.31 L217.30,206.96 L218.35,149.20 L219.40,149.22 L220.45,205.53 L221.50,205.53 L222.55,148.16 L223.60,206.97 L224.65,206.97 L225.70,206.97 L226.75,149.81 L227.80,206.64 L228.85,206.64 L229.90,206.64 L230.95,148.53 L232.00,205.18 L233.05,149.92 L234.10,149.57 L235.15,207.38 L236.20,207.38 L237.25,207.38 L238.30,150.42 L239.35,312.29 L240.40,149.50 L241.45,205.74 L242.50,205.74 L243.55,150.44 L244.60,311.87 L245.65,149.96 L246.70,207.02 L247.75,207.02 L248.80,207.02 L249.85,148.45 L250.90,148.51 L251.95,206.90 L253.00,206.90 L254.05,206.90 L255.10,148.10 L256.15,150.34 L257.20,312.10 L258.25,148.42 L259.30,148.26 L260.35,206.92 L261.40,206.92 L262.45,206.92 L263.50,150.58 L264.55,312.34 L265.60,150.27 L266.65,206.87 L267.70,149.34 L268.75,206.72 L269.80,206.72 L270.85,149.52 L271.90,206.73 L272.95,206.73 L274.00,150.69 L275.05,207.05 L276.10,207.05 L277.15,149.26 L278.20,312.23 L279.25,148.76 L280.30,148.29 L281.35,207.18 L282.40,150.74 L283.45,205.47 L284.50,205.47 L285.55,150.82 L286.60,311.69 L287.65,150.58 L288.70,244.60 L289.75,148.54 L290.80,312.06 L291.85,149.28 L292.90,293.39 L293.95,148.14 L295.00,206.74 L296.05,206.74 L297.10,206.74 L298.15,149.02 L299.20,205.41 L300.25,150.83 L301.30,312.27 L302.35,150.64 L303.40,237.15 L303.40,312.50 Z" fill="#E24D42" fill-opacity="0.1" stroke="none"/><path d="M85.00,150.76 L86.05,312.46 L87.10,148.35 L88.15,149.73 L89.20,205.23 L90.25,205.23 L91.30,149.27 L92.35,312.03 L93.40,150.42 L94.45,282.28 L95.50,149.73 L96.55,148.26 L97.60,207.36 L98.65,149.66 L99.70,312.14 L100.75,148.42 L101.80,148.96 L102.85,205.38 L103.90,205.38 L104.95,149.89 L106.00,149.14 L107.05,206.43 L108.10,148.67 L109.15,150.01 L110.20,312.23 L111.25,150.69 L112.30,149.11 L113.35,285.96 L114.40,148.32 L115.45,312.08 L116.50,150.15 L117.55,218.13 L118.60,149.53 L119.65,312.21 L120.70,149.28 L121.75,206.88 L122.80,150.31 L123.85,150.40 L124.90,312.20 L125.95,149.72 L127.00,230.01 L128.05,149.42 L129.10,206.80 L130.15,149.91 L131.20,205.79 L132.25,205.79 L133.30,205.79 L134.35,150.59 L135.40,311.70 L136.45,148.56 L137.50,296.20 L138.55,148.45 L139.60,312.17 L140.65,148.31 L141.70,254.63 L142.75,150.40 L143.80,206.75 L144.85,206.75 L145.90,150.01 L146.95,312.30 L148.00,148.58 L149.05,281.42 L150.10,150.43 L151.15,312.26 L152.20,149.27 L153.25,253.20 L154.30,150.04 L155.35,206.18 L156.40,150.34 L157.45,149.19 L158.50,312.41 L159.55,149.22 L160.60,148.62 L161.65,205.52 L162.70,205.52 L163.75,205.52 L164.80,149.78 L165.85,312.02 L166.90,148.37 L167.95,149.11 L169.00,227.10 L170.05,149.15 L171.10,149.88 L172.15,206.22 L173.20,206.22 L174.25,150.48 L175.30,206.24 L176.35,206.24 L177.40,206.24 L178.45,148.33 L179.50,312.21 L180.55,149.44 L181.60,205.61 L182.65,149.11 L183.70,150.03 L184.75,207.36 L185.80,207.36 L186.85,150.05 L187.90,312.19 L188.95,149.09 L190.00,255.30 L191.05,149.02 L192.10,148.72 L193.15,206.97 L194.20,206.97 L195.25,150.18 L196.30,312.06 L197.35,150.15 L198.40,206.22 L199.45,206.22 L200.50,150.04 L201.55,206.98 L202.60,206.98 L203.65,206.98 L204.70,150.88 L205.75,150.78 L206.80,312.31 L207.85,149.41 L208.90,260.30 L209.95,150.46 L211.00,149.44 L212.05,207.04 L213.10,150.66 L214.15,206.23 L215.20,206.23 L216.25,149.31 L217.30,206.96 L218.35,149.20 L219.40,149.22 L220.45,205.53 L221.50,205.53 L222.55,148.16 L223.60,206.97 L224.65,206.97 L225.70,206.97 L226.75,149.81 L227.80,206.64 L228.85,206.64 L229.90,206.64 L230.95,148.53 L232.00,205.18 L233.05,149.92 L234.10,149.57 L235.15,207.38 L236.20,207.38 L237.25,207.38 L238.30,150.42 L239.35,312.29 L240.40,149.50 L241.45,205.74 L242.50,205.74 L243.55,150.44 L244.60,311.87 L245.65,149.96 L246.70,207.02 L247.75,207.02 L248.80,207.02 L249.85,148.45 L250.90,148.51 L251.95,206.90 L253.00,206.90 L254.05,206.90 L255.10,148.10 L256.15,150.34 L257.20,312.10 L258.25,148.42 L259.30,148.26 L260.35,206.92 L261.40,206.92 L262.45,206.92 L263.50,150.58 L264.55,312.34 L265.60,150.27 L266.65,206.87 L267.70,149.34 L268.75,206.72 L269.80,206.72 L270.85,149.52 L271.90,206.73 L272.95,206.73 L274.00,150.69 L275.05,207.05 L276.10,207.05 L277.15,149.26 L278.20,312.23 L279.25,148.76 L280.30,148.29 L281.35,207.18 L282.40,150.74 L283.45,205.47 L284.50,205.47 L285.55,150.82 L286.60,311.69 L287.65,150.58 L288.70,244.60 L289.75,148.54 L290.80,312.06 L291.85,149.28 L292.90,293.39 L293.95,148.14 L295.00,206.74 L296.05,206.74 L297.10,206.74 L298.15,149.02 L299.20,205.41 L300.25,150.83 L301.30,312.27 L302.35,150.64 L303.40,237.15" fill="none" stroke="#E24D42" stroke-width="1.0" stroke-linejoin="round"/></g><line x1="548.3" x2="790" y1="312.5" y2="312.5" stroke="rgba(255,255,255,0.13)" stroke-width="1"/><line x1="548.3" x2="790" y1="278.5" y2="278.5" stroke="rgba(255,255,255,0.13)" stroke-width="1"/><line x1="548.3" x2="790" y1="244.5" y2="244.5" stroke="rgba(255,255,255,0.13)" stroke-width="1"/><line x1="548.3" x2="790" y1="210.5" y2="210.5" stroke="rgba(255,255,255,0.13)" stroke-width="1"/><line x1="548.3" x2="790" y1="176.5" y2="176.5" stroke="rgba(255,255,255,0.13)" stroke-width="1"/><line x1="548.3" x2="790" y1="142.5" y2="142.5" stroke="rgba(255,255,255,0.13)" stroke-width="1"/><line x1="623.6" x2="623.6" y1="142.5" y2="312.5" stroke="rgba(255,255,255,0.13)" stroke-width="1"/><line x1="704" x2="704" y1="142.5" y2="312.5" stroke="rgba(255,255,255,0.13)" stroke-width="1"/><line x1="784.1" x2="784.1" y1="142.5" y2="312.5" stroke="rgba(255,255,255,0.13)" stroke-width="1"/><path d="M548.3,312.5 L548.3,176.5 L790,176.5 L790,312.5 Z" fill="#7EB26D" fill-opacity="0.1"/><path d="M548.3,176.5 L548.3,176.5 L549.5,159.5 L550.0,159.5 L551.2,176.5 L589.2,176.5 L590.4000000000001,159.5 L590.8,159.5 L592,176.5 L628.8,176.5 L630.0,159.5 L636.0999999999999,159.5 L637.3,176.5 L669.7,176.5 L670.9000000000001,159.5 L671.1999999999999,159.5 L672.4,176.5 L710,176.5 L711.2,159.5 L710.5999999999999,159.5 L711.8,176.5 L750.3,176.5 L751.5,159.5 L751.8,159.5 L753,176.5 L790,176.5" fill="none" stroke="#7EB26D" stroke-width="1"/><path d="M784.1,312.5 L784.3,227.5 L784.9,312.5" fill="#E24D42" fill-opacity="0.1" stroke="#E24D42" stroke-width="1.1"/><line x1="548.3" x2="790" y1="312.2" y2="312.2" stroke="#BA43A9" stroke-width="1.6"/><line x1="97" x2="501.5" y1="518.6" y2="518.6" stroke="rgba(255,255,255,0.13)" stroke-width="1"/><line x1="97" x2="501.5" y1="486.35" y2="486.35" stroke="rgba(255,255,255,0.13)" stroke-width="1"/><line x1="97" x2="501.5" y1="454.1" y2="454.1" stroke="rgba(255,255,255,0.13)" stroke-width="1"/><line x1="97" x2="501.5" y1="421.85" y2="421.85" stroke="rgba(255,255,255,0.13)" stroke-width="1"/><line x1="97" x2="501.5" y1="389.6" y2="389.6" stroke="rgba(255,255,255,0.13)" stroke-width="1"/><line x1="153" x2="153" y1="389.6" y2="518.6" stroke="rgba(255,255,255,0.13)" stroke-width="1"/><line x1="220.6" x2="220.6" y1="389.6" y2="518.6" stroke="rgba(255,255,255,0.13)" stroke-width="1"/><line x1="288.5" x2="288.5" y1="389.6" y2="518.6" stroke="rgba(255,255,255,0.13)" stroke-width="1"/><line x1="356" x2="356" y1="389.6" y2="518.6" stroke="rgba(255,255,255,0.13)" stroke-width="1"/><line x1="423.4" x2="423.4" y1="389.6" y2="518.6" stroke="rgba(255,255,255,0.13)" stroke-width="1"/><line x1="490.8" x2="490.8" y1="389.6" y2="518.6" stroke="rgba(255,255,255,0.13)" stroke-width="1"/><path d="M97.00,518.60 L97.00,505.70 L99.00,505.28 L101.00,504.86 L103.00,506.35 L105.30,482.48 L107.00,505.70 L110.00,505.06 L111.40,494.09 L112.80,505.70 L114.00,492.48 L115.50,505.70 L117.20,504.72 L118.90,507.07 L120.60,503.77 L122.00,505.70 L124.00,505.06 L126.00,507.31 L128.00,502.48 L131.00,502.48 L133.00,505.70 L134.74,506.95 L136.49,505.66 L138.23,507.20 L139.98,505.24 L141.72,504.52 L143.47,505.49 L145.21,505.78 L146.96,506.04 L148.70,502.48 L150.00,505.70 L151.67,505.10 L153.33,507.02 L155.00,505.06 L157.50,490.87 L159.50,504.09 L161.50,489.58 L163.70,486.03 L165.50,487.96 L166.50,499.25 L167.20,488.29 L168.50,502.48 L170.40,479.58 L172.00,504.73 L176.00,503.12 L178.00,505.70 L179.60,506.44 L181.20,504.57 L182.80,506.76 L184.40,506.56 L186.00,504.73 L187.70,495.06 L189.00,504.73 L190.70,495.06 L192.00,504.73 L194.40,503.12 L196.00,505.70 L197.71,505.02 L199.43,507.31 L201.14,505.75 L202.86,504.42 L204.57,506.50 L206.29,506.39 L208.00,504.73 L209.80,492.48 L211.20,494.09 L213.00,504.73 L222.10,499.25 L224.00,505.70 L225.88,504.88 L227.76,506.61 L229.64,505.78 L231.52,505.72 L233.40,499.57 L235.00,505.70 L237.00,507.23 L239.00,506.12 L241.00,503.77 L242.76,505.43 L244.52,507.15 L246.28,506.75 L248.04,504.74 L249.80,503.77 L251.45,505.43 L253.10,507.08 L254.75,506.65 L256.40,506.08 L258.05,506.24 L259.70,505.88 L261.35,505.29 L263.00,504.73 L264.70,497.64 L266.50,504.73 L268.20,505.23 L269.90,506.26 L271.60,506.16 L273.30,507.29 L275.00,502.48 L276.75,506.46 L278.50,504.86 L280.25,507.12 L282.00,504.73 L283.60,486.35 L285.00,504.73 L286.67,505.87 L288.33,506.73 L290.00,504.73 L292.80,485.38 L295.00,504.73 L296.83,505.09 L298.67,506.75 L300.50,505.70 L302.20,458.29 L304.00,505.70 L305.83,505.96 L307.67,506.54 L309.50,505.70 L311.00,476.68 L312.50,505.70 L316.00,505.70 L317.50,490.87 L319.50,499.25 L321.00,505.70 L322.75,504.73 L324.50,507.00 L326.25,505.50 L328.00,502.48 L330.00,505.70 L331.79,505.54 L333.57,504.71 L335.36,505.90 L337.14,504.67 L338.93,507.15 L340.71,505.59 L342.50,505.70 L344.20,499.25 L346.00,505.70 L348.50,505.70 L350.00,494.74 L352.00,505.70 L353.60,504.64 L355.20,507.15 L356.80,507.24 L358.40,505.58 L360.00,505.70 L363.70,495.06 L365.00,499.25 L367.80,480.22 L370.00,489.58 L372.90,475.71 L376.00,505.70 L377.80,506.11 L379.60,505.25 L381.40,506.78 L383.20,506.01 L385.00,504.09 L387.70,496.03 L389.00,504.09 L391.80,480.22 L393.50,505.06 L395.12,505.25 L396.75,506.40 L398.38,506.98 L400.00,503.77 L402.00,505.70 L404.00,507.08 L406.00,506.83 L408.00,506.35 L409.80,469.58 L411.00,496.03 L413.00,491.19 L416.00,468.29 L418.00,465.71 L420.50,436.69 L421.50,489.58 L424.20,424.43 L425.50,497.64 L426.80,430.56 L428.50,486.35 L430.00,491.19 L431.00,487.96 L433.80,431.53 L435.00,476.68 L436.90,441.85 L439.00,489.58 L441.20,414.11 L442.50,463.78 L444.00,486.35 L446.70,460.23 L449.00,486.35 L452.00,502.48 L455.90,438.62 L457.50,489.58 L459.00,431.53 L461.00,460.55 L463.00,473.45 L465.00,470.23 L467.00,494.41 L468.50,471.84 L470.00,479.90 L472.00,475.06 L474.50,489.58 L477.00,502.48 L480.00,504.09 L484.00,503.12 L486.00,505.70 L490.00,505.70 L491.80,469.58 L493.00,505.70 L496.00,499.25 L498.00,490.87 L500.00,494.41 L501.50,492.80 L501.50,518.60 Z" fill="#7EB26D" fill-opacity="0.1"/><path d="M97.00,505.70 L99.00,505.28 L101.00,504.86 L103.00,506.35 L105.30,482.48 L107.00,505.70 L110.00,505.06 L111.40,494.09 L112.80,505.70 L114.00,492.48 L115.50,505.70 L117.20,504.72 L118.90,507.07 L120.60,503.77 L122.00,505.70 L124.00,505.06 L126.00,507.31 L128.00,502.48 L131.00,502.48 L133.00,505.70 L134.74,506.95 L136.49,505.66 L138.23,507.20 L139.98,505.24 L141.72,504.52 L143.47,505.49 L145.21,505.78 L146.96,506.04 L148.70,502.48 L150.00,505.70 L151.67,505.10 L153.33,507.02 L155.00,505.06 L157.50,490.87 L159.50,504.09 L161.50,489.58 L163.70,486.03 L165.50,487.96 L166.50,499.25 L167.20,488.29 L168.50,502.48 L170.40,479.58 L172.00,504.73 L176.00,503.12 L178.00,505.70 L179.60,506.44 L181.20,504.57 L182.80,506.76 L184.40,506.56 L186.00,504.73 L187.70,495.06 L189.00,504.73 L190.70,495.06 L192.00,504.73 L194.40,503.12 L196.00,505.70 L197.71,505.02 L199.43,507.31 L201.14,505.75 L202.86,504.42 L204.57,506.50 L206.29,506.39 L208.00,504.73 L209.80,492.48 L211.20,494.09 L213.00,504.73 L222.10,499.25 L224.00,505.70 L225.88,504.88 L227.76,506.61 L229.64,505.78 L231.52,505.72 L233.40,499.57 L235.00,505.70 L237.00,507.23 L239.00,506.12 L241.00,503.77 L242.76,505.43 L244.52,507.15 L246.28,506.75 L248.04,504.74 L249.80,503.77 L251.45,505.43 L253.10,507.08 L254.75,506.65 L256.40,506.08 L258.05,506.24 L259.70,505.88 L261.35,505.29 L263.00,504.73 L264.70,497.64 L266.50,504.73 L268.20,505.23 L269.90,506.26 L271.60,506.16 L273.30,507.29 L275.00,502.48 L276.75,506.46 L278.50,504.86 L280.25,507.12 L282.00,504.73 L283.60,486.35 L285.00,504.73 L286.67,505.87 L288.33,506.73 L290.00,504.73 L292.80,485.38 L295.00,504.73 L296.83,505.09 L298.67,506.75 L300.50,505.70 L302.20,458.29 L304.00,505.70 L305.83,505.96 L307.67,506.54 L309.50,505.70 L311.00,476.68 L312.50,505.70 L316.00,505.70 L317.50,490.87 L319.50,499.25 L321.00,505.70 L322.75,504.73 L324.50,507.00 L326.25,505.50 L328.00,502.48 L330.00,505.70 L331.79,505.54 L333.57,504.71 L335.36,505.90 L337.14,504.67 L338.93,507.15 L340.71,505.59 L342.50,505.70 L344.20,499.25 L346.00,505.70 L348.50,505.70 L350.00,494.74 L352.00,505.70 L353.60,504.64 L355.20,507.15 L356.80,507.24 L358.40,505.58 L360.00,505.70 L363.70,495.06 L365.00,499.25 L367.80,480.22 L370.00,489.58 L372.90,475.71 L376.00,505.70 L377.80,506.11 L379.60,505.25 L381.40,506.78 L383.20,506.01 L385.00,504.09 L387.70,496.03 L389.00,504.09 L391.80,480.22 L393.50,505.06 L395.12,505.25 L396.75,506.40 L398.38,506.98 L400.00,503.77 L402.00,505.70 L404.00,507.08 L406.00,506.83 L408.00,506.35 L409.80,469.58 L411.00,496.03 L413.00,491.19 L416.00,468.29 L418.00,465.71 L420.50,436.69 L421.50,489.58 L424.20,424.43 L425.50,497.64 L426.80,430.56 L428.50,486.35 L430.00,491.19 L431.00,487.96 L433.80,431.53 L435.00,476.68 L436.90,441.85 L439.00,489.58 L441.20,414.11 L442.50,463.78 L444.00,486.35 L446.70,460.23 L449.00,486.35 L452.00,502.48 L455.90,438.62 L457.50,489.58 L459.00,431.53 L461.00,460.55 L463.00,473.45 L465.00,470.23 L467.00,494.41 L468.50,471.84 L470.00,479.90 L472.00,475.06 L474.50,489.58 L477.00,502.48 L480.00,504.09 L484.00,503.12 L486.00,505.70 L490.00,505.70 L491.80,469.58 L493.00,505.70 L496.00,499.25 L498.00,490.87 L500.00,494.41 L501.50,492.80" fill="none" stroke="#7EB26D" stroke-width="1" stroke-linejoin="round"/><line x1="551.5" x2="785.5" y1="523.8" y2="523.8" stroke="rgba(255,255,255,0.13)" stroke-width="1"/><line x1="551.5" x2="785.5" y1="496.9" y2="496.9" stroke="rgba(255,255,255,0.13)" stroke-width="1"/><line x1="551.5" x2="785.5" y1="470.0" y2="470.0" stroke="rgba(255,255,255,0.13)" stroke-width="1"/><line x1="551.5" x2="785.5" y1="443.1" y2="443.1" stroke="rgba(255,255,255,0.13)" stroke-width="1"/><line x1="551.5" x2="785.5" y1="416.2" y2="416.2" stroke="rgba(255,255,255,0.13)" stroke-width="1"/><line x1="551.5" x2="785.5" y1="389.3" y2="389.3" stroke="rgba(255,255,255,0.13)" stroke-width="1"/><line x1="623.7" x2="623.7" y1="389.3" y2="523.8" stroke="rgba(255,255,255,0.13)" stroke-width="1"/><line x1="701.7" x2="701.7" y1="389.3" y2="523.8" stroke="rgba(255,255,255,0.13)" stroke-width="1"/><line x1="780" x2="780" y1="389.3" y2="523.8" stroke="rgba(255,255,255,0.13)" stroke-width="1"/><path d="M551.50,523.80 L551.50,412.25 L552.52,421.52 L553.54,409.32 L554.57,418.74 L555.59,407.19 L556.61,424.14 L557.63,410.33 L558.65,427.53 L559.67,402.76 L560.70,421.74 L561.72,410.08 L562.74,423.07 L563.76,406.73 L564.78,417.24 L565.81,410.70 L566.83,421.09 L567.85,410.74 L568.87,422.34 L569.89,404.49 L570.91,413.03 L571.94,406.25 L572.96,414.73 L573.98,406.21 L575.00,414.99 L576.02,412.21 L577.05,421.02 L578.07,410.78 L579.09,435.16 L580.11,404.65 L581.13,420.13 L582.16,408.02 L583.18,416.82 L584.20,403.20 L585.22,416.51 L586.24,411.48 L587.26,422.23 L588.29,407.17 L589.31,424.32 L590.33,401.90 L591.35,412.34 L592.37,413.08 L593.40,424.82 L594.42,406.55 L595.44,413.58 L596.46,401.47 L597.48,421.01 L598.50,404.81 L599.53,419.41 L600.55,407.24 L601.57,420.21 L602.59,409.29 L603.61,420.47 L604.64,409.42 L605.66,434.90 L606.68,410.19 L607.70,419.19 L608.72,406.32 L609.74,417.17 L610.77,410.09 L611.79,424.30 L612.81,406.48 L613.83,420.87 L614.85,407.83 L615.88,417.93 L616.90,410.79 L617.92,418.53 L618.94,409.20 L619.96,414.34 L620.98,407.88 L622.01,421.33 L623.03,411.95 L624.05,418.51 L625.07,408.97 L626.09,418.02 L627.12,407.00 L628.14,433.39 L629.16,410.48 L630.18,419.39 L631.20,406.24 L632.22,429.86 L633.25,407.17 L634.27,428.42 L635.29,411.65 L636.31,421.57 L637.33,405.57 L638.36,410.90 L639.38,407.23 L640.40,431.19 L641.42,412.96 L642.44,435.57 L643.47,401.05 L644.49,423.05 L645.51,406.42 L646.53,419.19 L647.55,408.96 L648.57,415.38 L649.60,409.24 L650.62,416.78 L651.64,408.36 L652.66,414.78 L653.68,407.74 L654.71,420.00 L655.73,405.00 L656.75,421.95 L657.77,412.22 L658.79,423.32 L659.81,404.92 L660.84,410.91 L661.86,407.47 L662.88,422.57 L663.90,408.25 L664.92,422.76 L665.95,410.28 L666.97,434.34 L667.99,410.28 L669.01,418.83 L670.03,413.03 L671.05,417.41 L672.08,407.87 L673.10,422.16 L674.12,402.90 L675.14,417.23 L676.16,411.19 L677.19,431.65 L678.21,407.07 L679.23,423.98 L680.25,409.12 L681.27,437.98 L682.29,409.97 L683.32,419.02 L684.34,412.88 L685.36,422.78 L686.38,401.72 L687.40,421.78 L688.43,407.66 L689.45,420.66 L690.47,408.75 L691.49,435.78 L692.51,407.83 L693.53,419.72 L694.56,401.17 L695.58,424.26 L696.60,407.10 L697.62,424.26 L698.64,403.87 L699.67,418.10 L700.69,406.39 L701.71,423.74 L702.73,407.86 L703.75,416.11 L704.78,408.66 L705.80,419.11 L706.82,411.50 L707.84,413.40 L708.86,408.74 L709.88,419.31 L710.91,406.86 L711.93,419.16 L712.95,405.66 L713.97,412.66 L714.99,409.71 L716.02,419.88 L717.04,407.55 L718.06,415.27 L719.08,405.79 L720.10,418.83 L721.12,412.80 L722.15,422.84 L723.17,407.77 L724.19,427.99 L725.21,408.58 L726.23,422.84 L727.26,411.78 L728.28,419.78 L729.30,404.56 L730.32,424.24 L731.34,407.82 L732.36,417.81 L733.39,404.95 L734.41,418.64 L735.43,406.09 L736.45,424.54 L737.47,411.56 L738.50,424.80 L739.52,405.81 L740.54,421.61 L741.56,409.40 L742.58,412.93 L743.60,407.96 L744.63,415.36 L745.65,408.74 L746.67,423.27 L747.69,405.63 L748.71,415.62 L749.74,405.60 L750.76,419.52 L751.78,408.19 L752.80,421.09 L753.82,409.49 L754.84,420.30 L755.87,410.50 L756.89,419.52 L757.91,411.59 L758.93,427.71 L759.95,409.11 L760.98,421.15 L762.00,408.59 L763.02,415.72 L764.04,406.99 L765.06,422.15 L766.09,405.99 L767.11,423.35 L768.13,410.69 L769.15,422.24 L770.17,408.14 L771.19,413.89 L772.22,408.37 L773.24,428.82 L774.26,410.93 L775.28,417.81 L776.30,408.01 L777.33,419.26 L778.35,410.88 L779.37,424.07 L780.39,413.02 L781.41,423.80 L782.43,408.31 L783.46,416.34 L784.48,408.67 L785.50,418.28 L785.50,523.80 Z" fill="#7EB26D" fill-opacity="0.1" stroke="none"/><path d="M551.50,412.25 L552.52,421.52 L553.54,409.32 L554.57,418.74 L555.59,407.19 L556.61,424.14 L557.63,410.33 L558.65,427.53 L559.67,402.76 L560.70,421.74 L561.72,410.08 L562.74,423.07 L563.76,406.73 L564.78,417.24 L565.81,410.70 L566.83,421.09 L567.85,410.74 L568.87,422.34 L569.89,404.49 L570.91,413.03 L571.94,406.25 L572.96,414.73 L573.98,406.21 L575.00,414.99 L576.02,412.21 L577.05,421.02 L578.07,410.78 L579.09,435.16 L580.11,404.65 L581.13,420.13 L582.16,408.02 L583.18,416.82 L584.20,403.20 L585.22,416.51 L586.24,411.48 L587.26,422.23 L588.29,407.17 L589.31,424.32 L590.33,401.90 L591.35,412.34 L592.37,413.08 L593.40,424.82 L594.42,406.55 L595.44,413.58 L596.46,401.47 L597.48,421.01 L598.50,404.81 L599.53,419.41 L600.55,407.24 L601.57,420.21 L602.59,409.29 L603.61,420.47 L604.64,409.42 L605.66,434.90 L606.68,410.19 L607.70,419.19 L608.72,406.32 L609.74,417.17 L610.77,410.09 L611.79,424.30 L612.81,406.48 L613.83,420.87 L614.85,407.83 L615.88,417.93 L616.90,410.79 L617.92,418.53 L618.94,409.20 L619.96,414.34 L620.98,407.88 L622.01,421.33 L623.03,411.95 L624.05,418.51 L625.07,408.97 L626.09,418.02 L627.12,407.00 L628.14,433.39 L629.16,410.48 L630.18,419.39 L631.20,406.24 L632.22,429.86 L633.25,407.17 L634.27,428.42 L635.29,411.65 L636.31,421.57 L637.33,405.57 L638.36,410.90 L639.38,407.23 L640.40,431.19 L641.42,412.96 L642.44,435.57 L643.47,401.05 L644.49,423.05 L645.51,406.42 L646.53,419.19 L647.55,408.96 L648.57,415.38 L649.60,409.24 L650.62,416.78 L651.64,408.36 L652.66,414.78 L653.68,407.74 L654.71,420.00 L655.73,405.00 L656.75,421.95 L657.77,412.22 L658.79,423.32 L659.81,404.92 L660.84,410.91 L661.86,407.47 L662.88,422.57 L663.90,408.25 L664.92,422.76 L665.95,410.28 L666.97,434.34 L667.99,410.28 L669.01,418.83 L670.03,413.03 L671.05,417.41 L672.08,407.87 L673.10,422.16 L674.12,402.90 L675.14,417.23 L676.16,411.19 L677.19,431.65 L678.21,407.07 L679.23,423.98 L680.25,409.12 L681.27,437.98 L682.29,409.97 L683.32,419.02 L684.34,412.88 L685.36,422.78 L686.38,401.72 L687.40,421.78 L688.43,407.66 L689.45,420.66 L690.47,408.75 L691.49,435.78 L692.51,407.83 L693.53,419.72 L694.56,401.17 L695.58,424.26 L696.60,407.10 L697.62,424.26 L698.64,403.87 L699.67,418.10 L700.69,406.39 L701.71,423.74 L702.73,407.86 L703.75,416.11 L704.78,408.66 L705.80,419.11 L706.82,411.50 L707.84,413.40 L708.86,408.74 L709.88,419.31 L710.91,406.86 L711.93,419.16 L712.95,405.66 L713.97,412.66 L714.99,409.71 L716.02,419.88 L717.04,407.55 L718.06,415.27 L719.08,405.79 L720.10,418.83 L721.12,412.80 L722.15,422.84 L723.17,407.77 L724.19,427.99 L725.21,408.58 L726.23,422.84 L727.26,411.78 L728.28,419.78 L729.30,404.56 L730.32,424.24 L731.34,407.82 L732.36,417.81 L733.39,404.95 L734.41,418.64 L735.43,406.09 L736.45,424.54 L737.47,411.56 L738.50,424.80 L739.52,405.81 L740.54,421.61 L741.56,409.40 L742.58,412.93 L743.60,407.96 L744.63,415.36 L745.65,408.74 L746.67,423.27 L747.69,405.63 L748.71,415.62 L749.74,405.60 L750.76,419.52 L751.78,408.19 L752.80,421.09 L753.82,409.49 L754.84,420.30 L755.87,410.50 L756.89,419.52 L757.91,411.59 L758.93,427.71 L759.95,409.11 L760.98,421.15 L762.00,408.59 L763.02,415.72 L764.04,406.99 L765.06,422.15 L766.09,405.99 L767.11,423.35 L768.13,410.69 L769.15,422.24 L770.17,408.14 L771.19,413.89 L772.22,408.37 L773.24,428.82 L774.26,410.93 L775.28,417.81 L776.30,408.01 L777.33,419.26 L778.35,410.88 L779.37,424.07 L780.39,413.02 L781.41,423.80 L782.43,408.31 L783.46,416.34 L784.48,408.67 L785.50,418.28" fill="none" stroke="#7EB26D" stroke-width="0.9" stroke-linejoin="round"/><path d="M551.50,523.80 L551.50,411.47 L552.52,420.99 L553.54,410.83 L554.57,420.22 L555.59,409.01 L556.61,423.98 L557.63,410.46 L558.65,433.47 L559.67,407.45 L560.70,420.21 L561.72,411.44 L562.74,425.64 L563.76,407.08 L564.78,415.14 L565.81,414.12 L566.83,419.23 L567.85,412.88 L568.87,421.79 L569.89,407.83 L570.91,419.69 L571.94,412.22 L572.96,418.41 L573.98,405.20 L575.00,414.49 L576.02,413.36 L577.05,422.61 L578.07,412.99 L579.09,436.33 L580.11,408.42 L581.13,426.97 L582.16,409.40 L583.18,421.75 L584.20,407.33 L585.22,416.39 L586.24,410.61 L587.26,424.19 L588.29,408.12 L589.31,426.45 L590.33,408.14 L591.35,415.85 L592.37,414.75 L593.40,425.70 L594.42,406.28 L595.44,417.57 L596.46,408.94 L597.48,421.40 L598.50,408.67 L599.53,418.92 L600.55,413.13 L601.57,422.61 L602.59,411.62 L603.61,420.26 L604.64,408.46 L605.66,434.89 L606.68,410.85 L607.70,420.72 L608.72,405.95 L609.74,419.11 L610.77,412.09 L611.79,424.42 L612.81,410.65 L613.83,424.85 L614.85,405.92 L615.88,420.38 L616.90,410.49 L617.92,419.01 L618.94,410.19 L619.96,418.87 L620.98,413.28 L622.01,427.24 L623.03,410.86 L624.05,416.44 L625.07,407.42 L626.09,424.52 L627.12,410.92 L628.14,438.38 L629.16,411.23 L630.18,419.75 L631.20,407.39 L632.22,436.98 L633.25,408.90 L634.27,434.35 L635.29,411.28 L636.31,424.37 L637.33,409.61 L638.36,416.12 L639.38,406.55 L640.40,434.22 L641.42,411.32 L642.44,438.38 L643.47,405.00 L644.49,425.77 L645.51,410.32 L646.53,421.25 L647.55,412.69 L648.57,415.41 L649.60,411.10 L650.62,419.46 L651.64,407.44 L652.66,418.33 L653.68,409.32 L654.71,421.62 L655.73,406.55 L656.75,424.64 L657.77,414.22 L658.79,421.27 L659.81,408.70 L660.84,417.99 L661.86,407.88 L662.88,424.92 L663.90,409.23 L664.92,425.03 L665.95,411.73 L666.97,435.84 L667.99,409.48 L669.01,423.66 L670.03,414.03 L671.05,416.75 L672.08,409.40 L673.10,420.24 L674.12,409.99 L675.14,419.18 L676.16,413.66 L677.19,431.41 L678.21,406.09 L679.23,425.98 L680.25,413.62 L681.27,436.42 L682.29,413.44 L683.32,423.69 L684.34,413.09 L685.36,424.63 L686.38,406.80 L687.40,422.74 L688.43,409.03 L689.45,422.24 L690.47,409.38 L691.49,439.80 L692.51,413.41 L693.53,422.11 L694.56,405.28 L695.58,422.18 L696.60,406.35 L697.62,425.59 L698.64,410.54 L699.67,419.85 L700.69,407.70 L701.71,424.09 L702.73,408.82 L703.75,419.44 L704.78,409.88 L705.80,417.74 L706.82,411.67 L707.84,416.34 L708.86,408.84 L709.88,422.26 L710.91,406.47 L711.93,424.56 L712.95,409.05 L713.97,415.48 L714.99,408.78 L716.02,425.67 L717.04,407.54 L718.06,416.98 L719.08,405.88 L720.10,420.68 L721.12,414.64 L722.15,422.46 L723.17,410.64 L724.19,428.99 L725.21,410.66 L726.23,422.47 L727.26,412.34 L728.28,422.99 L729.30,406.51 L730.32,421.84 L731.34,407.02 L732.36,418.92 L733.39,406.95 L734.41,417.28 L735.43,410.68 L736.45,425.53 L737.47,412.02 L738.50,424.41 L739.52,411.11 L740.54,421.26 L741.56,408.76 L742.58,417.92 L743.60,409.17 L744.63,419.50 L745.65,408.88 L746.67,425.75 L747.69,406.94 L748.71,419.08 L749.74,405.64 L750.76,418.42 L751.78,406.07 L752.80,424.49 L753.82,410.47 L754.84,424.66 L755.87,412.39 L756.89,421.85 L757.91,414.17 L758.93,431.46 L759.95,410.92 L760.98,426.73 L762.00,407.64 L763.02,418.41 L764.04,405.66 L765.06,423.45 L766.09,410.03 L767.11,423.67 L768.13,409.78 L769.15,424.12 L770.17,410.14 L771.19,415.39 L772.22,409.97 L773.24,432.82 L774.26,413.36 L775.28,423.54 L776.30,408.26 L777.33,419.45 L778.35,408.47 L779.37,426.48 L780.39,412.23 L781.41,424.24 L782.43,411.27 L783.46,418.10 L784.48,408.42 L785.50,416.95 L785.50,523.80 Z" fill="#EAB839" fill-opacity="0.1" stroke="none"/><path d="M551.50,411.47 L552.52,420.99 L553.54,410.83 L554.57,420.22 L555.59,409.01 L556.61,423.98 L557.63,410.46 L558.65,433.47 L559.67,407.45 L560.70,420.21 L561.72,411.44 L562.74,425.64 L563.76,407.08 L564.78,415.14 L565.81,414.12 L566.83,419.23 L567.85,412.88 L568.87,421.79 L569.89,407.83 L570.91,419.69 L571.94,412.22 L572.96,418.41 L573.98,405.20 L575.00,414.49 L576.02,413.36 L577.05,422.61 L578.07,412.99 L579.09,436.33 L580.11,408.42 L581.13,426.97 L582.16,409.40 L583.18,421.75 L584.20,407.33 L585.22,416.39 L586.24,410.61 L587.26,424.19 L588.29,408.12 L589.31,426.45 L590.33,408.14 L591.35,415.85 L592.37,414.75 L593.40,425.70 L594.42,406.28 L595.44,417.57 L596.46,408.94 L597.48,421.40 L598.50,408.67 L599.53,418.92 L600.55,413.13 L601.57,422.61 L602.59,411.62 L603.61,420.26 L604.64,408.46 L605.66,434.89 L606.68,410.85 L607.70,420.72 L608.72,405.95 L609.74,419.11 L610.77,412.09 L611.79,424.42 L612.81,410.65 L613.83,424.85 L614.85,405.92 L615.88,420.38 L616.90,410.49 L617.92,419.01 L618.94,410.19 L619.96,418.87 L620.98,413.28 L622.01,427.24 L623.03,410.86 L624.05,416.44 L625.07,407.42 L626.09,424.52 L627.12,410.92 L628.14,438.38 L629.16,411.23 L630.18,419.75 L631.20,407.39 L632.22,436.98 L633.25,408.90 L634.27,434.35 L635.29,411.28 L636.31,424.37 L637.33,409.61 L638.36,416.12 L639.38,406.55 L640.40,434.22 L641.42,411.32 L642.44,438.38 L643.47,405.00 L644.49,425.77 L645.51,410.32 L646.53,421.25 L647.55,412.69 L648.57,415.41 L649.60,411.10 L650.62,419.46 L651.64,407.44 L652.66,418.33 L653.68,409.32 L654.71,421.62 L655.73,406.55 L656.75,424.64 L657.77,414.22 L658.79,421.27 L659.81,408.70 L660.84,417.99 L661.86,407.88 L662.88,424.92 L663.90,409.23 L664.92,425.03 L665.95,411.73 L666.97,435.84 L667.99,409.48 L669.01,423.66 L670.03,414.03 L671.05,416.75 L672.08,409.40 L673.10,420.24 L674.12,409.99 L675.14,419.18 L676.16,413.66 L677.19,431.41 L678.21,406.09 L679.23,425.98 L680.25,413.62 L681.27,436.42 L682.29,413.44 L683.32,423.69 L684.34,413.09 L685.36,424.63 L686.38,406.80 L687.40,422.74 L688.43,409.03 L689.45,422.24 L690.47,409.38 L691.49,439.80 L692.51,413.41 L693.53,422.11 L694.56,405.28 L695.58,422.18 L696.60,406.35 L697.62,425.59 L698.64,410.54 L699.67,419.85 L700.69,407.70 L701.71,424.09 L702.73,408.82 L703.75,419.44 L704.78,409.88 L705.80,417.74 L706.82,411.67 L707.84,416.34 L708.86,408.84 L709.88,422.26 L710.91,406.47 L711.93,424.56 L712.95,409.05 L713.97,415.48 L714.99,408.78 L716.02,425.67 L717.04,407.54 L718.06,416.98 L719.08,405.88 L720.10,420.68 L721.12,414.64 L722.15,422.46 L723.17,410.64 L724.19,428.99 L725.21,410.66 L726.23,422.47 L727.26,412.34 L728.28,422.99 L729.30,406.51 L730.32,421.84 L731.34,407.02 L732.36,418.92 L733.39,406.95 L734.41,417.28 L735.43,410.68 L736.45,425.53 L737.47,412.02 L738.50,424.41 L739.52,411.11 L740.54,421.26 L741.56,408.76 L742.58,417.92 L743.60,409.17 L744.63,419.50 L745.65,408.88 L746.67,425.75 L747.69,406.94 L748.71,419.08 L749.74,405.64 L750.76,418.42 L751.78,406.07 L752.80,424.49 L753.82,410.47 L754.84,424.66 L755.87,412.39 L756.89,421.85 L757.91,414.17 L758.93,431.46 L759.95,410.92 L760.98,426.73 L762.00,407.64 L763.02,418.41 L764.04,405.66 L765.06,423.45 L766.09,410.03 L767.11,423.67 L768.13,409.78 L769.15,424.12 L770.17,410.14 L771.19,415.39 L772.22,409.97 L773.24,432.82 L774.26,413.36 L775.28,423.54 L776.30,408.26 L777.33,419.45 L778.35,408.47 L779.37,426.48 L780.39,412.23 L781.41,424.24 L782.43,411.27 L783.46,418.10 L784.48,408.42 L785.50,416.95" fill="none" stroke="#EAB839" stroke-width="0.9" stroke-linejoin="round"/><path d="M551.50,523.80 L551.50,523.77 L552.52,523.77 L553.54,523.77 L554.57,523.77 L555.59,523.77 L556.61,523.77 L557.63,523.77 L558.65,523.77 L559.67,523.77 L560.70,523.77 L561.72,523.77 L562.74,523.77 L563.76,523.77 L564.78,523.77 L565.81,523.77 L566.83,523.77 L567.85,523.77 L568.87,523.77 L569.89,523.77 L570.91,523.77 L571.94,523.77 L572.96,523.77 L573.98,523.77 L575.00,523.77 L576.02,523.77 L577.05,523.77 L578.07,523.77 L579.09,523.77 L580.11,523.77 L581.13,523.77 L582.16,523.77 L583.18,523.77 L584.20,523.77 L585.22,523.77 L586.24,523.77 L587.26,523.77 L588.29,523.77 L589.31,523.77 L590.33,523.77 L591.35,523.77 L592.37,523.77 L593.40,523.77 L594.42,523.77 L595.44,523.77 L596.46,523.77 L597.48,523.77 L598.50,523.77 L599.53,523.77 L600.55,523.77 L601.57,523.77 L602.59,523.77 L603.61,523.77 L604.64,523.77 L605.66,523.77 L606.68,523.77 L607.70,523.77 L608.72,523.77 L609.74,523.77 L610.77,523.77 L611.79,523.77 L612.81,523.77 L613.83,523.77 L614.85,523.77 L615.88,523.77 L616.90,523.77 L617.92,523.77 L618.94,523.77 L619.96,523.77 L620.98,523.77 L622.01,523.77 L623.03,523.77 L624.05,523.77 L625.07,523.77 L626.09,523.77 L627.12,523.77 L628.14,523.77 L629.16,523.77 L630.18,523.77 L631.20,523.77 L632.22,523.77 L633.25,523.77 L634.27,523.77 L635.29,523.77 L636.31,523.77 L637.33,523.77 L638.36,523.77 L639.38,523.77 L640.40,523.77 L641.42,523.77 L642.44,523.77 L643.47,523.77 L644.49,523.77 L645.51,523.77 L646.53,523.77 L647.55,523.77 L648.57,523.77 L649.60,523.77 L650.62,523.77 L651.64,523.77 L652.66,523.77 L653.68,523.77 L654.71,523.77 L655.73,523.77 L656.75,523.77 L657.77,523.77 L658.79,523.77 L659.81,523.77 L660.84,523.77 L661.86,523.77 L662.88,523.77 L663.90,523.77 L664.92,523.77 L665.95,523.77 L666.97,523.77 L667.99,523.77 L669.01,523.77 L670.03,523.77 L671.05,523.77 L672.08,523.77 L673.10,523.77 L674.12,523.77 L675.14,523.77 L676.16,523.77 L677.19,523.77 L678.21,523.77 L679.23,523.77 L680.25,523.77 L681.27,523.77 L682.29,523.77 L683.32,523.77 L684.34,523.77 L685.36,523.77 L686.38,523.77 L687.40,523.77 L688.43,523.77 L689.45,523.77 L690.47,523.77 L691.49,523.77 L692.51,523.77 L693.53,523.77 L694.56,523.77 L695.58,523.77 L696.60,523.77 L697.62,523.77 L698.64,523.77 L699.67,523.77 L700.69,523.77 L701.71,523.77 L702.73,523.77 L703.75,523.77 L704.78,523.77 L705.80,523.77 L706.82,523.77 L707.84,523.77 L708.86,523.77 L709.88,523.77 L710.91,523.77 L711.93,523.77 L712.95,523.77 L713.97,523.77 L714.99,523.77 L716.02,523.77 L717.04,523.77 L718.06,523.77 L719.08,523.77 L720.10,523.77 L721.12,523.77 L722.15,523.77 L723.17,523.77 L724.19,523.77 L725.21,523.77 L726.23,523.77 L727.26,523.77 L728.28,523.77 L729.30,523.77 L730.32,523.77 L731.34,523.77 L732.36,523.77 L733.39,523.77 L734.41,523.77 L735.43,523.77 L736.45,523.77 L737.47,523.77 L738.50,523.77 L739.52,523.77 L740.54,523.77 L741.56,523.77 L742.58,523.77 L743.60,523.77 L744.63,523.77 L745.65,523.77 L746.67,523.77 L747.69,523.77 L748.71,523.77 L749.74,523.77 L750.76,523.77 L751.78,523.77 L752.80,523.77 L753.82,523.77 L754.84,523.77 L755.87,523.77 L756.89,523.77 L757.91,523.77 L758.93,523.77 L759.95,523.77 L760.98,523.77 L762.00,523.77 L763.02,523.77 L764.04,523.77 L765.06,523.77 L766.09,523.77 L767.11,523.77 L768.13,523.77 L769.15,523.77 L770.17,523.77 L771.19,523.77 L772.22,523.77 L773.24,523.77 L774.26,523.77 L775.28,523.77 L776.30,523.77 L777.33,523.77 L778.35,523.77 L779.37,523.77 L780.39,523.77 L781.41,523.77 L782.43,523.77 L783.46,523.77 L784.48,523.77 L785.50,523.77 L785.50,523.80 Z" fill="#6ED0E0" fill-opacity="0.1" stroke="none"/><path d="M551.50,523.77 L552.52,523.77 L553.54,523.77 L554.57,523.77 L555.59,523.77 L556.61,523.77 L557.63,523.77 L558.65,523.77 L559.67,523.77 L560.70,523.77 L561.72,523.77 L562.74,523.77 L563.76,523.77 L564.78,523.77 L565.81,523.77 L566.83,523.77 L567.85,523.77 L568.87,523.77 L569.89,523.77 L570.91,523.77 L571.94,523.77 L572.96,523.77 L573.98,523.77 L575.00,523.77 L576.02,523.77 L577.05,523.77 L578.07,523.77 L579.09,523.77 L580.11,523.77 L581.13,523.77 L582.16,523.77 L583.18,523.77 L584.20,523.77 L585.22,523.77 L586.24,523.77 L587.26,523.77 L588.29,523.77 L589.31,523.77 L590.33,523.77 L591.35,523.77 L592.37,523.77 L593.40,523.77 L594.42,523.77 L595.44,523.77 L596.46,523.77 L597.48,523.77 L598.50,523.77 L599.53,523.77 L600.55,523.77 L601.57,523.77 L602.59,523.77 L603.61,523.77 L604.64,523.77 L605.66,523.77 L606.68,523.77 L607.70,523.77 L608.72,523.77 L609.74,523.77 L610.77,523.77 L611.79,523.77 L612.81,523.77 L613.83,523.77 L614.85,523.77 L615.88,523.77 L616.90,523.77 L617.92,523.77 L618.94,523.77 L619.96,523.77 L620.98,523.77 L622.01,523.77 L623.03,523.77 L624.05,523.77 L625.07,523.77 L626.09,523.77 L627.12,523.77 L628.14,523.77 L629.16,523.77 L630.18,523.77 L631.20,523.77 L632.22,523.77 L633.25,523.77 L634.27,523.77 L635.29,523.77 L636.31,523.77 L637.33,523.77 L638.36,523.77 L639.38,523.77 L640.40,523.77 L641.42,523.77 L642.44,523.77 L643.47,523.77 L644.49,523.77 L645.51,523.77 L646.53,523.77 L647.55,523.77 L648.57,523.77 L649.60,523.77 L650.62,523.77 L651.64,523.77 L652.66,523.77 L653.68,523.77 L654.71,523.77 L655.73,523.77 L656.75,523.77 L657.77,523.77 L658.79,523.77 L659.81,523.77 L660.84,523.77 L661.86,523.77 L662.88,523.77 L663.90,523.77 L664.92,523.77 L665.95,523.77 L666.97,523.77 L667.99,523.77 L669.01,523.77 L670.03,523.77 L671.05,523.77 L672.08,523.77 L673.10,523.77 L674.12,523.77 L675.14,523.77 L676.16,523.77 L677.19,523.77 L678.21,523.77 L679.23,523.77 L680.25,523.77 L681.27,523.77 L682.29,523.77 L683.32,523.77 L684.34,523.77 L685.36,523.77 L686.38,523.77 L687.40,523.77 L688.43,523.77 L689.45,523.77 L690.47,523.77 L691.49,523.77 L692.51,523.77 L693.53,523.77 L694.56,523.77 L695.58,523.77 L696.60,523.77 L697.62,523.77 L698.64,523.77 L699.67,523.77 L700.69,523.77 L701.71,523.77 L702.73,523.77 L703.75,523.77 L704.78,523.77 L705.80,523.77 L706.82,523.77 L707.84,523.77 L708.86,523.77 L709.88,523.77 L710.91,523.77 L711.93,523.77 L712.95,523.77 L713.97,523.77 L714.99,523.77 L716.02,523.77 L717.04,523.77 L718.06,523.77 L719.08,523.77 L720.10,523.77 L721.12,523.77 L722.15,523.77 L723.17,523.77 L724.19,523.77 L725.21,523.77 L726.23,523.77 L727.26,523.77 L728.28,523.77 L729.30,523.77 L730.32,523.77 L731.34,523.77 L732.36,523.77 L733.39,523.77 L734.41,523.77 L735.43,523.77 L736.45,523.77 L737.47,523.77 L738.50,523.77 L739.52,523.77 L740.54,523.77 L741.56,523.77 L742.58,523.77 L743.60,523.77 L744.63,523.77 L745.65,523.77 L746.67,523.77 L747.69,523.77 L748.71,523.77 L749.74,523.77 L750.76,523.77 L751.78,523.77 L752.80,523.77 L753.82,523.77 L754.84,523.77 L755.87,523.77 L756.89,523.77 L757.91,523.77 L758.93,523.77 L759.95,523.77 L760.98,523.77 L762.00,523.77 L763.02,523.77 L764.04,523.77 L765.06,523.77 L766.09,523.77 L767.11,523.77 L768.13,523.77 L769.15,523.77 L770.17,523.77 L771.19,523.77 L772.22,523.77 L773.24,523.77 L774.26,523.77 L775.28,523.77 L776.30,523.77 L777.33,523.77 L778.35,523.77 L779.37,523.77 L780.39,523.77 L781.41,523.77 L782.43,523.77 L783.46,523.77 L784.48,523.77 L785.50,523.77" fill="none" stroke="#6ED0E0" stroke-width="1" stroke-linejoin="round"/><path d="M551.50,523.80 L551.50,411.27 L552.52,421.89 L553.54,409.18 L554.57,418.50 L555.59,406.38 L556.61,425.20 L557.63,411.88 L558.65,432.02 L559.67,406.04 L560.70,420.98 L561.72,409.84 L562.74,423.04 L563.76,406.65 L564.78,416.27 L565.81,411.23 L566.83,420.78 L567.85,410.27 L568.87,422.73 L569.89,407.95 L570.91,417.86 L571.94,409.65 L572.96,419.13 L573.98,406.65 L575.00,416.01 L576.02,412.23 L577.05,421.42 L578.07,410.18 L579.09,435.53 L580.11,407.51 L581.13,424.59 L582.16,407.27 L583.18,421.32 L584.20,405.57 L585.22,416.04 L586.24,411.90 L587.26,422.52 L588.29,406.86 L589.31,423.25 L590.33,406.57 L591.35,416.71 L592.37,412.64 L593.40,424.66 L594.42,407.49 L595.44,416.90 L596.46,406.22 L597.48,419.98 L598.50,408.22 L599.53,420.49 L600.55,411.50 L601.57,419.45 L602.59,409.07 L603.61,420.81 L604.64,409.49 L605.66,434.22 L606.68,411.13 L607.70,419.58 L608.72,405.38 L609.74,417.12 L610.77,409.23 L611.79,424.26 L612.81,408.65 L613.83,423.10 L614.85,406.83 L615.88,418.32 L616.90,410.69 L617.92,417.92 L618.94,409.39 L619.96,417.24 L620.98,410.58 L622.01,424.43 L623.03,412.21 L624.05,417.90 L625.07,408.74 L626.09,421.86 L627.12,409.21 L628.14,437.00 L629.16,410.96 L630.18,419.85 L631.20,406.10 L632.22,433.96 L633.25,406.47 L634.27,433.01 L635.29,411.36 L636.31,421.40 L637.33,407.70 L638.36,415.46 L639.38,407.36 L640.40,431.16 L641.42,412.37 L642.44,435.38 L643.47,405.82 L644.49,423.50 L645.51,409.62 L646.53,419.09 L647.55,412.12 L648.57,415.71 L649.60,409.06 L650.62,419.46 L651.64,407.70 L652.66,416.93 L653.68,407.78 L654.71,419.35 L655.73,405.26 L656.75,422.04 L657.77,412.32 L658.79,422.81 L659.81,409.58 L660.84,415.57 L661.86,406.66 L662.88,421.81 L663.90,409.65 L664.92,424.77 L665.95,411.52 L666.97,433.72 L667.99,409.96 L669.01,423.09 L670.03,412.31 L671.05,416.81 L672.08,409.71 L673.10,421.09 L674.12,407.15 L675.14,417.10 L676.16,411.48 L677.19,431.63 L678.21,407.03 L679.23,423.28 L680.25,410.43 L681.27,437.32 L682.29,410.33 L683.32,421.44 L684.34,412.05 L685.36,422.48 L686.38,405.99 L687.40,421.77 L688.43,408.03 L689.45,421.51 L690.47,409.14 L691.49,437.60 L692.51,411.52 L693.53,418.97 L694.56,405.39 L695.58,423.51 L696.60,406.05 L697.62,423.78 L698.64,407.67 L699.67,418.62 L700.69,409.27 L701.71,423.84 L702.73,407.81 L703.75,418.46 L704.78,409.77 L705.80,419.05 L706.82,411.36 L707.84,415.43 L708.86,409.20 L709.88,419.84 L710.91,406.53 L711.93,423.72 L712.95,409.69 L713.97,416.06 L714.99,409.95 L716.02,423.38 L717.04,407.75 L718.06,415.80 L719.08,405.76 L720.10,418.52 L721.12,412.10 L722.15,422.88 L723.17,407.79 L724.19,428.21 L725.21,408.08 L726.23,422.29 L727.26,411.71 L728.28,424.21 L729.30,406.59 L730.32,423.31 L731.34,407.27 L732.36,417.59 L733.39,408.11 L734.41,417.90 L735.43,408.08 L736.45,424.40 L737.47,410.79 L738.50,424.99 L739.52,408.24 L740.54,421.52 L741.56,409.90 L742.58,417.37 L743.60,407.91 L744.63,418.16 L745.65,409.86 L746.67,423.28 L747.69,406.92 L748.71,415.88 L749.74,405.43 L750.76,419.90 L751.78,407.52 L752.80,424.31 L753.82,408.67 L754.84,423.92 L755.87,409.91 L756.89,419.13 L757.91,411.60 L758.93,429.97 L759.95,408.07 L760.98,424.93 L762.00,408.82 L763.02,418.48 L764.04,406.15 L765.06,424.63 L766.09,407.18 L767.11,422.83 L768.13,410.51 L769.15,421.62 L770.17,409.96 L771.19,415.87 L772.22,408.09 L773.24,433.60 L774.26,410.42 L775.28,420.60 L776.30,409.59 L777.33,418.39 L778.35,409.94 L779.37,423.64 L780.39,412.60 L781.41,423.37 L782.43,409.31 L783.46,416.03 L784.48,407.69 L785.50,418.08 L785.50,523.80 Z" fill="#EF843C" fill-opacity="0.1" stroke="none"/><path d="M551.50,411.27 L552.52,421.89 L553.54,409.18 L554.57,418.50 L555.59,406.38 L556.61,425.20 L557.63,411.88 L558.65,432.02 L559.67,406.04 L560.70,420.98 L561.72,409.84 L562.74,423.04 L563.76,406.65 L564.78,416.27 L565.81,411.23 L566.83,420.78 L567.85,410.27 L568.87,422.73 L569.89,407.95 L570.91,417.86 L571.94,409.65 L572.96,419.13 L573.98,406.65 L575.00,416.01 L576.02,412.23 L577.05,421.42 L578.07,410.18 L579.09,435.53 L580.11,407.51 L581.13,424.59 L582.16,407.27 L583.18,421.32 L584.20,405.57 L585.22,416.04 L586.24,411.90 L587.26,422.52 L588.29,406.86 L589.31,423.25 L590.33,406.57 L591.35,416.71 L592.37,412.64 L593.40,424.66 L594.42,407.49 L595.44,416.90 L596.46,406.22 L597.48,419.98 L598.50,408.22 L599.53,420.49 L600.55,411.50 L601.57,419.45 L602.59,409.07 L603.61,420.81 L604.64,409.49 L605.66,434.22 L606.68,411.13 L607.70,419.58 L608.72,405.38 L609.74,417.12 L610.77,409.23 L611.79,424.26 L612.81,408.65 L613.83,423.10 L614.85,406.83 L615.88,418.32 L616.90,410.69 L617.92,417.92 L618.94,409.39 L619.96,417.24 L620.98,410.58 L622.01,424.43 L623.03,412.21 L624.05,417.90 L625.07,408.74 L626.09,421.86 L627.12,409.21 L628.14,437.00 L629.16,410.96 L630.18,419.85 L631.20,406.10 L632.22,433.96 L633.25,406.47 L634.27,433.01 L635.29,411.36 L636.31,421.40 L637.33,407.70 L638.36,415.46 L639.38,407.36 L640.40,431.16 L641.42,412.37 L642.44,435.38 L643.47,405.82 L644.49,423.50 L645.51,409.62 L646.53,419.09 L647.55,412.12 L648.57,415.71 L649.60,409.06 L650.62,419.46 L651.64,407.70 L652.66,416.93 L653.68,407.78 L654.71,419.35 L655.73,405.26 L656.75,422.04 L657.77,412.32 L658.79,422.81 L659.81,409.58 L660.84,415.57 L661.86,406.66 L662.88,421.81 L663.90,409.65 L664.92,424.77 L665.95,411.52 L666.97,433.72 L667.99,409.96 L669.01,423.09 L670.03,412.31 L671.05,416.81 L672.08,409.71 L673.10,421.09 L674.12,407.15 L675.14,417.10 L676.16,411.48 L677.19,431.63 L678.21,407.03 L679.23,423.28 L680.25,410.43 L681.27,437.32 L682.29,410.33 L683.32,421.44 L684.34,412.05 L685.36,422.48 L686.38,405.99 L687.40,421.77 L688.43,408.03 L689.45,421.51 L690.47,409.14 L691.49,437.60 L692.51,411.52 L693.53,418.97 L694.56,405.39 L695.58,423.51 L696.60,406.05 L697.62,423.78 L698.64,407.67 L699.67,418.62 L700.69,409.27 L701.71,423.84 L702.73,407.81 L703.75,418.46 L704.78,409.77 L705.80,419.05 L706.82,411.36 L707.84,415.43 L708.86,409.20 L709.88,419.84 L710.91,406.53 L711.93,423.72 L712.95,409.69 L713.97,416.06 L714.99,409.95 L716.02,423.38 L717.04,407.75 L718.06,415.80 L719.08,405.76 L720.10,418.52 L721.12,412.10 L722.15,422.88 L723.17,407.79 L724.19,428.21 L725.21,408.08 L726.23,422.29 L727.26,411.71 L728.28,424.21 L729.30,406.59 L730.32,423.31 L731.34,407.27 L732.36,417.59 L733.39,408.11 L734.41,417.90 L735.43,408.08 L736.45,424.40 L737.47,410.79 L738.50,424.99 L739.52,408.24 L740.54,421.52 L741.56,409.90 L742.58,417.37 L743.60,407.91 L744.63,418.16 L745.65,409.86 L746.67,423.28 L747.69,406.92 L748.71,415.88 L749.74,405.43 L750.76,419.90 L751.78,407.52 L752.80,424.31 L753.82,408.67 L754.84,423.92 L755.87,409.91 L756.89,419.13 L757.91,411.60 L758.93,429.97 L759.95,408.07 L760.98,424.93 L762.00,408.82 L763.02,418.48 L764.04,406.15 L765.06,424.63 L766.09,407.18 L767.11,422.83 L768.13,410.51 L769.15,421.62 L770.17,409.96 L771.19,415.87 L772.22,408.09 L773.24,433.60 L774.26,410.42 L775.28,420.60 L776.30,409.59 L777.33,418.39 L778.35,409.94 L779.37,423.64 L780.39,412.60 L781.41,423.37 L782.43,409.31 L783.46,416.03 L784.48,407.69 L785.50,418.08" fill="none" stroke="#EF843C" stroke-width="0.9" stroke-linejoin="round"/><line x1="89.4" x2="500.6" y1="729.6" y2="729.6" stroke="rgba(255,255,255,0.13)" stroke-width="1"/><line x1="89.4" x2="500.6" y1="703.72" y2="703.72" stroke="rgba(255,255,255,0.13)" stroke-width="1"/><line x1="89.4" x2="500.6" y1="677.84" y2="677.84" stroke="rgba(255,255,255,0.13)" stroke-width="1"/><line x1="89.4" x2="500.6" y1="651.96" y2="651.96" stroke="rgba(255,255,255,0.13)" stroke-width="1"/><line x1="89.4" x2="500.6" y1="626.08" y2="626.08" stroke="rgba(255,255,255,0.13)" stroke-width="1"/><line x1="89.4" x2="500.6" y1="600.2" y2="600.2" stroke="rgba(255,255,255,0.13)" stroke-width="1"/><line x1="147.4" x2="147.4" y1="600.2" y2="729.6" stroke="rgba(255,255,255,0.13)" stroke-width="1"/><line x1="216.2" x2="216.2" y1="600.2" y2="729.6" stroke="rgba(255,255,255,0.13)" stroke-width="1"/><line x1="284.8" x2="284.8" y1="600.2" y2="729.6" stroke="rgba(255,255,255,0.13)" stroke-width="1"/><line x1="353" x2="353" y1="600.2" y2="729.6" stroke="rgba(255,255,255,0.13)" stroke-width="1"/><line x1="422" x2="422" y1="600.2" y2="729.6" stroke="rgba(255,255,255,0.13)" stroke-width="1"/><line x1="490.8" x2="490.8" y1="600.2" y2="729.6" stroke="rgba(255,255,255,0.13)" stroke-width="1"/><path d="M89.40,729.60 L89.40,623.45 L91.47,636.21 L93.53,628.92 L95.60,635.64 L97.67,625.44 L99.73,635.06 L101.80,631.67 L103.86,636.08 L105.93,625.50 L108.00,638.06 L110.06,630.61 L112.13,634.68 L114.20,629.02 L116.26,636.08 L118.33,622.35 L120.39,639.12 L122.46,629.74 L124.53,635.36 L126.59,624.95 L128.66,632.54 L130.73,629.61 L132.79,634.94 L134.86,628.85 L136.93,634.33 L138.99,628.54 L141.06,638.49 L143.12,623.50 L145.19,634.29 L147.26,629.63 L149.32,637.33 L151.39,628.05 L153.46,638.10 L155.52,620.84 L157.59,638.06 L159.66,628.84 L161.72,640.96 L163.79,631.28 L165.85,637.97 L167.92,626.15 L169.99,633.90 L172.05,631.64 L174.12,637.19 L176.19,625.08 L178.25,644.10 L180.32,632.25 L182.38,644.22 L184.45,628.07 L186.52,632.70 L188.58,629.34 L190.65,636.14 L192.72,625.06 L194.78,635.16 L196.85,629.44 L198.92,637.26 L200.98,627.77 L203.05,642.69 L205.11,629.30 L207.18,641.77 L209.25,625.42 L211.31,637.10 L213.38,629.52 L215.45,634.62 L217.51,627.82 L219.58,634.49 L221.65,630.97 L223.71,634.18 L225.78,617.50 L227.84,633.18 L229.91,625.63 L231.98,640.87 L234.04,632.61 L236.11,635.00 L238.18,629.60 L240.24,641.65 L242.31,627.55 L244.37,639.24 L246.44,627.73 L248.51,636.78 L250.57,629.47 L252.64,638.47 L254.71,624.28 L256.77,636.76 L258.84,624.59 L260.91,635.89 L262.97,627.63 L265.04,633.12 L267.10,629.22 L269.17,637.26 L271.24,627.74 L273.30,638.12 L275.37,630.11 L277.44,636.16 L279.50,624.84 L281.57,634.45 L283.64,628.48 L285.70,636.85 L287.77,630.08 L289.83,637.79 L291.90,630.03 L293.97,635.42 L296.03,627.80 L298.10,631.84 L300.17,628.97 L302.23,638.28 L304.30,630.46 L306.36,639.64 L308.43,628.19 L310.50,639.52 L312.56,630.13 L314.63,635.84 L316.70,627.23 L318.76,633.70 L320.83,624.30 L322.90,634.85 L324.96,630.62 L327.03,634.37 L329.09,627.15 L331.16,634.27 L333.23,631.84 L335.29,637.55 L337.36,624.47 L339.43,635.94 L341.49,630.35 L343.56,634.89 L345.63,627.32 L347.69,638.38 L349.76,628.43 L351.82,640.23 L353.89,625.73 L355.96,639.53 L358.02,631.23 L360.09,637.74 L362.16,630.85 L364.22,635.06 L366.29,627.31 L368.35,634.84 L370.42,629.95 L372.49,639.92 L374.55,631.47 L376.62,640.20 L378.69,629.72 L380.75,644.99 L382.82,627.67 L384.89,643.03 L386.95,628.24 L389.02,646.14 L391.08,631.82 L393.15,638.78 L395.22,629.86 L397.28,637.28 L399.35,626.41 L401.42,636.19 L403.48,620.95 L405.55,633.93 L407.62,626.87 L409.68,638.26 L411.75,629.62 L413.81,636.71 L415.88,629.55 L417.95,638.39 L420.01,628.64 L422.08,636.79 L424.15,628.25 L426.21,637.35 L428.28,632.19 L430.34,632.81 L432.41,627.80 L434.48,644.22 L436.54,626.26 L438.61,632.84 L440.68,627.91 L442.74,635.57 L444.81,627.35 L446.88,634.82 L448.94,620.94 L451.01,637.76 L453.07,631.41 L455.14,636.24 L457.21,629.17 L459.27,636.90 L461.34,626.74 L463.41,636.55 L465.47,627.76 L467.54,637.81 L469.61,625.66 L471.67,637.70 L473.74,627.15 L475.80,635.62 L477.87,625.30 L479.94,639.88 L482.00,626.86 L484.07,635.84 L486.14,626.95 L488.20,637.14 L490.27,626.56 L492.33,634.71 L494.40,627.57 L496.47,635.08 L498.53,630.80 L500.60,644.43 L500.60,729.60 Z" fill="#F9BA8F" fill-opacity="0.1" stroke="none"/><path d="M89.40,623.45 L91.47,636.21 L93.53,628.92 L95.60,635.64 L97.67,625.44 L99.73,635.06 L101.80,631.67 L103.86,636.08 L105.93,625.50 L108.00,638.06 L110.06,630.61 L112.13,634.68 L114.20,629.02 L116.26,636.08 L118.33,622.35 L120.39,639.12 L122.46,629.74 L124.53,635.36 L126.59,624.95 L128.66,632.54 L130.73,629.61 L132.79,634.94 L134.86,628.85 L136.93,634.33 L138.99,628.54 L141.06,638.49 L143.12,623.50 L145.19,634.29 L147.26,629.63 L149.32,637.33 L151.39,628.05 L153.46,638.10 L155.52,620.84 L157.59,638.06 L159.66,628.84 L161.72,640.96 L163.79,631.28 L165.85,637.97 L167.92,626.15 L169.99,633.90 L172.05,631.64 L174.12,637.19 L176.19,625.08 L178.25,644.10 L180.32,632.25 L182.38,644.22 L184.45,628.07 L186.52,632.70 L188.58,629.34 L190.65,636.14 L192.72,625.06 L194.78,635.16 L196.85,629.44 L198.92,637.26 L200.98,627.77 L203.05,642.69 L205.11,629.30 L207.18,641.77 L209.25,625.42 L211.31,637.10 L213.38,629.52 L215.45,634.62 L217.51,627.82 L219.58,634.49 L221.65,630.97 L223.71,634.18 L225.78,617.50 L227.84,633.18 L229.91,625.63 L231.98,640.87 L234.04,632.61 L236.11,635.00 L238.18,629.60 L240.24,641.65 L242.31,627.55 L244.37,639.24 L246.44,627.73 L248.51,636.78 L250.57,629.47 L252.64,638.47 L254.71,624.28 L256.77,636.76 L258.84,624.59 L260.91,635.89 L262.97,627.63 L265.04,633.12 L267.10,629.22 L269.17,637.26 L271.24,627.74 L273.30,638.12 L275.37,630.11 L277.44,636.16 L279.50,624.84 L281.57,634.45 L283.64,628.48 L285.70,636.85 L287.77,630.08 L289.83,637.79 L291.90,630.03 L293.97,635.42 L296.03,627.80 L298.10,631.84 L300.17,628.97 L302.23,638.28 L304.30,630.46 L306.36,639.64 L308.43,628.19 L310.50,639.52 L312.56,630.13 L314.63,635.84 L316.70,627.23 L318.76,633.70 L320.83,624.30 L322.90,634.85 L324.96,630.62 L327.03,634.37 L329.09,627.15 L331.16,634.27 L333.23,631.84 L335.29,637.55 L337.36,624.47 L339.43,635.94 L341.49,630.35 L343.56,634.89 L345.63,627.32 L347.69,638.38 L349.76,628.43 L351.82,640.23 L353.89,625.73 L355.96,639.53 L358.02,631.23 L360.09,637.74 L362.16,630.85 L364.22,635.06 L366.29,627.31 L368.35,634.84 L370.42,629.95 L372.49,639.92 L374.55,631.47 L376.62,640.20 L378.69,629.72 L380.75,644.99 L382.82,627.67 L384.89,643.03 L386.95,628.24 L389.02,646.14 L391.08,631.82 L393.15,638.78 L395.22,629.86 L397.28,637.28 L399.35,626.41 L401.42,636.19 L403.48,620.95 L405.55,633.93 L407.62,626.87 L409.68,638.26 L411.75,629.62 L413.81,636.71 L415.88,629.55 L417.95,638.39 L420.01,628.64 L422.08,636.79 L424.15,628.25 L426.21,637.35 L428.28,632.19 L430.34,632.81 L432.41,627.80 L434.48,644.22 L436.54,626.26 L438.61,632.84 L440.68,627.91 L442.74,635.57 L444.81,627.35 L446.88,634.82 L448.94,620.94 L451.01,637.76 L453.07,631.41 L455.14,636.24 L457.21,629.17 L459.27,636.90 L461.34,626.74 L463.41,636.55 L465.47,627.76 L467.54,637.81 L469.61,625.66 L471.67,637.70 L473.74,627.15 L475.80,635.62 L477.87,625.30 L479.94,639.88 L482.00,626.86 L484.07,635.84 L486.14,626.95 L488.20,637.14 L490.27,626.56 L492.33,634.71 L494.40,627.57 L496.47,635.08 L498.53,630.80 L500.60,644.43" fill="none" stroke="#F9BA8F" stroke-width="1.1" stroke-linejoin="round"/><line x1="563.6" x2="968.9" y1="730.0" y2="730.0" stroke="rgba(255,255,255,0.13)" stroke-width="1"/><line x1="563.6" x2="968.9" y1="686.8" y2="686.8" stroke="rgba(255,255,255,0.13)" stroke-width="1"/><line x1="563.6" x2="968.9" y1="643.6" y2="643.6" stroke="rgba(255,255,255,0.13)" stroke-width="1"/><line x1="563.6" x2="968.9" y1="600.4" y2="600.4" stroke="rgba(255,255,255,0.13)" stroke-width="1"/><line x1="619.4" x2="619.4" y1="600.4" y2="730" stroke="rgba(255,255,255,0.13)" stroke-width="1"/><line x1="687.5" x2="687.5" y1="600.4" y2="730" stroke="rgba(255,255,255,0.13)" stroke-width="1"/><line x1="755.2" x2="755.2" y1="600.4" y2="730" stroke="rgba(255,255,255,0.13)" stroke-width="1"/><line x1="822.9" x2="822.9" y1="600.4" y2="730" stroke="rgba(255,255,255,0.13)" stroke-width="1"/><line x1="890.6" x2="890.6" y1="600.4" y2="730" stroke="rgba(255,255,255,0.13)" stroke-width="1"/><line x1="958.8" x2="958.8" y1="600.4" y2="730" stroke="rgba(255,255,255,0.13)" stroke-width="1"/><path d="M563.60,730.00 L563.60,655.26 L608.63,655.26 L653.67,655.26 L698.70,655.26 L743.73,655.26 L788.77,655.26 L833.80,655.26 L878.83,655.26 L923.87,655.26 L968.90,655.26 L968.90,730.00 Z" fill="#EAB839" fill-opacity="0.1" stroke="none"/><path d="M563.60,655.26 L608.63,655.26 L653.67,655.26 L698.70,655.26 L743.73,655.26 L788.77,655.26 L833.80,655.26 L878.83,655.26 L923.87,655.26 L968.90,655.26" fill="none" stroke="#EAB839" stroke-width="1.0" stroke-linejoin="round"/></svg>
<div class="t" style="left:24px;top:769.5px;font-size:12px;color:#9a9a9a;font-weight:normal;transform:translate(-50%,-50%) scaleX(1.0);transform-origin:center center;">?</div>
</body></html>
